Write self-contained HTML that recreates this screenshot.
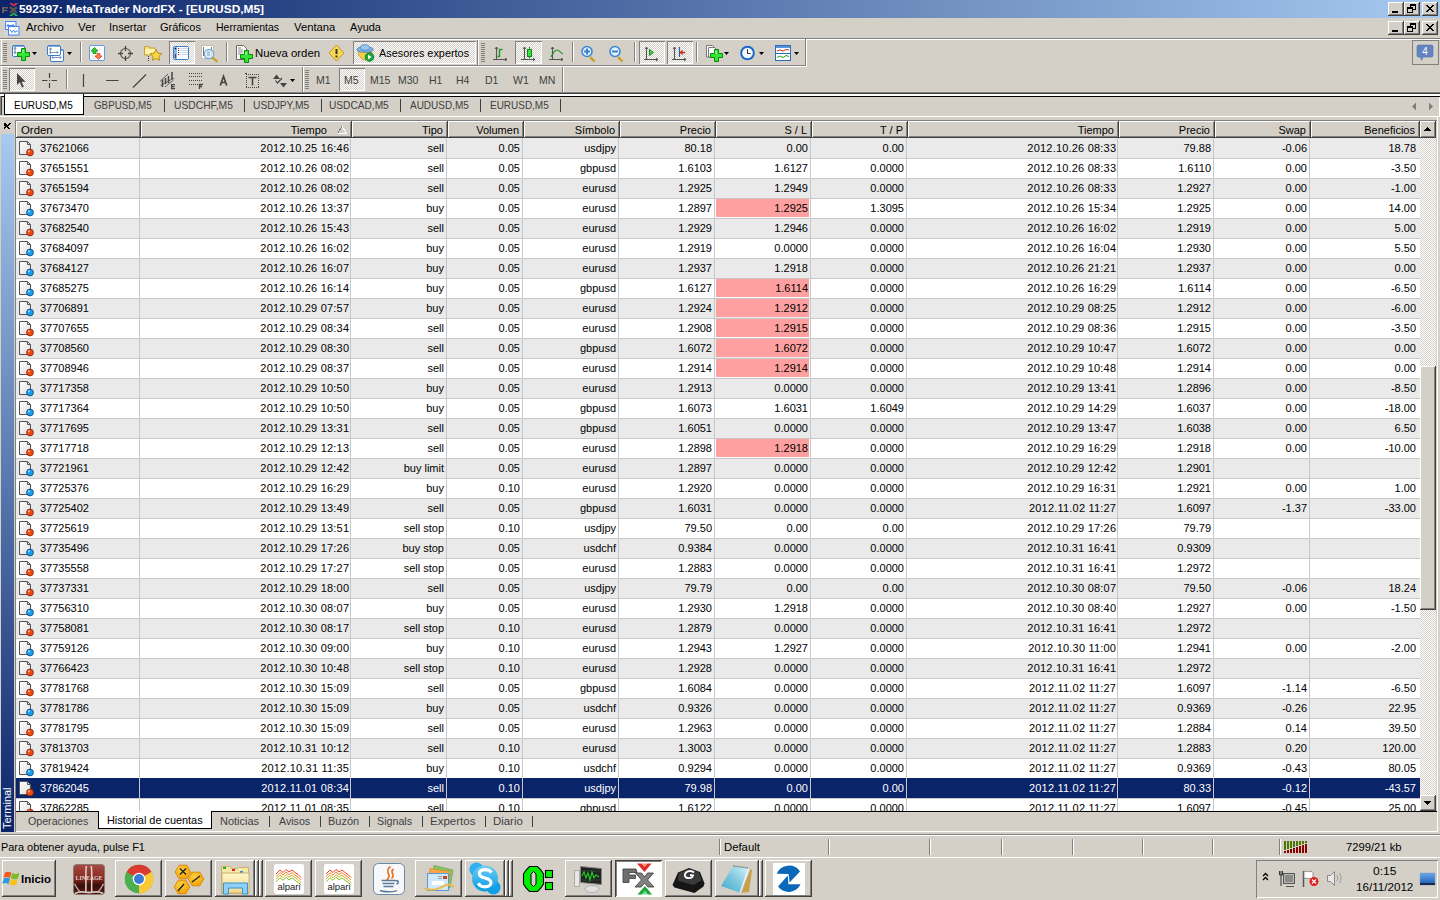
<!DOCTYPE html><html><head><meta charset="utf-8"><title>MetaTrader</title><style>
*{box-sizing:border-box}
html,body{margin:0;padding:0}
body{width:1440px;height:900px;position:relative;overflow:hidden;background:#D4D0C8;font-family:"Liberation Sans",sans-serif;font-size:11px;color:#000}
div,svg{position:absolute}
.t{white-space:nowrap;line-height:12px;height:12px}
.rb{background:#D4D0C8;box-shadow:inset -1px -1px #404040,inset 1px 1px #fff,inset -2px -2px #808080}
.pr{background-color:#fff;background-image:linear-gradient(45deg,#D4D0C8 25%,transparent 25%,transparent 75%,#D4D0C8 75%),linear-gradient(45deg,#D4D0C8 25%,transparent 25%,transparent 75%,#D4D0C8 75%);background-size:2px 2px;background-position:0 0,1px 1px;box-shadow:inset 1px 1px #808080,inset -1px -1px #fff}
.hd{background:#D4D0C8;box-shadow:inset -1px -1px #404040,inset 1px 1px #fff,inset -2px -2px #808080}
.grip{background:repeating-linear-gradient(to bottom,#808080 0 1px,transparent 1px 2px);width:4px}
.cell{position:absolute;text-align:right;white-space:nowrap;line-height:12px;height:12px}
</style></head><body>
<svg width="0" height="0" style="left:0;top:0"><defs><linearGradient id="dg" x1="0" y1="0" x2="1" y2="1"><stop offset="0" stop-color="#fff"/><stop offset="1" stop-color="#DDD"/></linearGradient></defs></svg>
<div style="left:0px;top:0px;width:1440px;height:18px;background:linear-gradient(to right,#0A246A 0%,#A6CAF0 100%)"></div>
<div class="t" style="left:18.98px;top:3px;transform-origin:0 0;transform:scaleX(1.0167);color:#fff;font-weight:bold;font-size:11.7px">592397: MetaTrader NordFX - [EURUSD,M5]</div>
<div class="rb" style="left:1388px;top:2px;width:16px;height:14px;"></div><div style="left:1392px;top:11px;width:6px;height:2px;background:#000"></div><div class="rb" style="left:1404px;top:2px;width:16px;height:14px;"></div><div style="left:1410px;top:4px;width:6px;height:6px;border:1px solid #000;border-top-width:2px"></div><div style="left:1407px;top:7px;width:6px;height:6px;border:1px solid #000;border-top-width:2px;background:#D4D0C8"></div><div class="rb" style="left:1422px;top:2px;width:16px;height:14px;"></div><svg style="left:1425px;top:4px;" width="10" height="9" viewBox="0 0 10 9" shape-rendering="crispEdges"><path d="M1 1L8 8M2 1L9 8M8 1L1 8M9 1L2 8" stroke="#000" stroke-width="1" shape-rendering="crispEdges"/></svg>
<div class="t" style="left:26.00px;top:21px;transform-origin:0 0;transform:scaleX(1.0278);">Archivo</div>
<div class="t" style="left:78.00px;top:21px;transform-origin:0 0;transform:scaleX(1.0625);">Ver</div>
<div class="t" style="left:109.00px;top:21px;transform-origin:0 0;transform:scaleX(1.0000);">Insertar</div>
<div class="t" style="left:160.00px;top:21px;transform-origin:0 0;transform:scaleX(1.0000);">Gráficos</div>
<div class="t" style="left:216.05px;top:21px;transform-origin:0 0;transform:scaleX(0.9538);">Herramientas</div>
<div class="t" style="left:294.00px;top:21px;transform-origin:0 0;transform:scaleX(1.0250);">Ventana</div>
<div class="t" style="left:350.00px;top:21px;transform-origin:0 0;transform:scaleX(1.0000);">Ayuda</div>
<div class="rb" style="left:1388px;top:21px;width:16px;height:14px;"></div><div style="left:1392px;top:30px;width:6px;height:2px;background:#000"></div><div class="rb" style="left:1404px;top:21px;width:16px;height:14px;"></div><div style="left:1410px;top:23px;width:6px;height:6px;border:1px solid #000;border-top-width:2px"></div><div style="left:1407px;top:26px;width:6px;height:6px;border:1px solid #000;border-top-width:2px;background:#D4D0C8"></div><div class="rb" style="left:1422px;top:21px;width:16px;height:14px;"></div><svg style="left:1425px;top:23px;" width="10" height="9" viewBox="0 0 10 9" shape-rendering="crispEdges"><path d="M1 1L8 8M2 1L9 8M8 1L1 8M9 1L2 8" stroke="#000" stroke-width="1" shape-rendering="crispEdges"/></svg>
<div style="left:0px;top:38px;width:1440px;height:1px;background:#808080"></div>
<div style="left:0px;top:39px;width:1440px;height:1px;background:#fff"></div>
<div style="left:0px;top:65px;width:806px;height:1px;background:#808080"></div>
<div style="left:0px;top:66px;width:807px;height:1px;background:#fff"></div>
<div style="left:1px;top:40px;width:1px;height:25px;background:#fff"></div>
<div style="left:477px;top:40px;width:1px;height:26px;background:#808080"></div>
<div style="left:478px;top:40px;width:1px;height:25px;background:#fff"></div>
<div style="left:805px;top:39px;width:1px;height:27px;background:#808080"></div>
<div style="left:806px;top:39px;width:1px;height:28px;background:#fff"></div>
<div class="grip" style="left:3px;top:43px;width:4px;height:19px;"></div>
<div class="grip" style="left:481px;top:43px;width:4px;height:19px;"></div>
<div style="left:80px;top:42px;width:1px;height:20px;background:#808080"></div><div style="left:81px;top:42px;width:1px;height:20px;background:#fff"></div>
<div style="left:226px;top:42px;width:1px;height:20px;background:#808080"></div><div style="left:227px;top:42px;width:1px;height:20px;background:#fff"></div>
<div style="left:572px;top:42px;width:1px;height:20px;background:#808080"></div><div style="left:573px;top:42px;width:1px;height:20px;background:#fff"></div>
<div style="left:634px;top:42px;width:1px;height:20px;background:#808080"></div><div style="left:635px;top:42px;width:1px;height:20px;background:#fff"></div>
<div style="left:696px;top:42px;width:1px;height:20px;background:#808080"></div><div style="left:697px;top:42px;width:1px;height:20px;background:#fff"></div>
<div class="pr" style="left:169px;top:41px;width:26px;height:23px;"></div>
<div class="pr" style="left:353px;top:41px;width:123px;height:23px;"></div>
<div class="pr" style="left:515px;top:41px;width:27px;height:23px;"></div>
<div class="pr" style="left:639px;top:41px;width:26px;height:23px;"></div>
<div class="pr" style="left:667px;top:41px;width:26px;height:23px;"></div>
<div class="t" style="left:254.97px;top:47px;transform-origin:0 0;transform:scaleX(1.0328);">Nueva orden</div>
<div class="t" style="left:379.00px;top:47px;transform-origin:0 0;transform:scaleX(0.9890);">Asesores expertos</div>
<div style="left:0px;top:92px;width:1440px;height:1px;background:#808080"></div>
<div style="left:0px;top:93px;width:1440px;height:1px;background:#404040"></div>
<div style="left:1px;top:67px;width:1px;height:25px;background:#fff"></div>
<div style="left:302px;top:67px;width:1px;height:25px;background:#808080"></div>
<div style="left:303px;top:67px;width:1px;height:25px;background:#fff"></div>
<div style="left:562px;top:67px;width:1px;height:25px;background:#808080"></div>
<div style="left:563px;top:67px;width:1px;height:25px;background:#fff"></div>
<div class="grip" style="left:3px;top:70px;width:4px;height:19px;"></div>
<div class="grip" style="left:305px;top:70px;width:4px;height:19px;"></div>
<div style="left:66px;top:69px;width:1px;height:20px;background:#808080"></div><div style="left:67px;top:69px;width:1px;height:20px;background:#fff"></div>
<div class="pr" style="left:9px;top:68px;width:26px;height:23px;"></div>
<div class="pr" style="left:339px;top:68px;width:26px;height:23px;"></div>
<div class="t" style="left:316px;top:74px;color:#404040;font-size:10.5px">M1</div>
<div class="t" style="left:344px;top:74px;color:#404040;font-size:10.5px">M5</div>
<div class="t" style="left:370px;top:74px;color:#404040;font-size:10.5px">M15</div>
<div class="t" style="left:398px;top:74px;color:#404040;font-size:10.5px">M30</div>
<div class="t" style="left:429px;top:74px;color:#404040;font-size:10.5px">H1</div>
<div class="t" style="left:456px;top:74px;color:#404040;font-size:10.5px">H4</div>
<div class="t" style="left:485px;top:74px;color:#404040;font-size:10.5px">D1</div>
<div class="t" style="left:513px;top:74px;color:#404040;font-size:10.5px">W1</div>
<div class="t" style="left:539px;top:74px;color:#404040;font-size:10.5px">MN</div>
<div style="left:0px;top:94px;width:1440px;height:2px;background:#fff"></div>
<div style="left:0px;top:96px;width:1440px;height:1px;background:#000"></div>
<div style="left:1439px;top:97px;width:1px;height:19px;background:#fff"></div>
<div style="left:0px;top:96px;width:1px;height:19px;background:#808080"></div>
<div style="left:1px;top:96px;width:1px;height:19px;background:#404040"></div>
<div style="left:4px;top:94px;width:80px;height:21px;background:#fff;border:1px solid #000;border-top:none"></div>
<div class="t" style="left:14.09px;top:99px;transform-origin:0 0;transform:scaleX(0.9062);">EURUSD,M5</div>
<div class="t" style="left:94.11px;top:99px;transform-origin:0 0;transform:scaleX(0.8906);color:#404040">GBPUSD,M5</div>
<div style="left:164px;top:99px;width:1px;height:13px;background:#404040"></div>
<div class="t" style="left:174.06px;top:99px;transform-origin:0 0;transform:scaleX(0.9355);color:#404040">USDCHF,M5</div>
<div style="left:244px;top:99px;width:1px;height:13px;background:#404040"></div>
<div class="t" style="left:253.07px;top:99px;transform-origin:0 0;transform:scaleX(0.9322);color:#404040">USDJPY,M5</div>
<div style="left:321px;top:99px;width:1px;height:13px;background:#404040"></div>
<div class="t" style="left:329.08px;top:99px;transform-origin:0 0;transform:scaleX(0.9219);color:#404040">USDCAD,M5</div>
<div style="left:400px;top:99px;width:1px;height:13px;background:#404040"></div>
<div class="t" style="left:410.00px;top:99px;transform-origin:0 0;transform:scaleX(0.9077);color:#404040">AUDUSD,M5</div>
<div style="left:480px;top:99px;width:1px;height:13px;background:#404040"></div>
<div class="t" style="left:490.09px;top:99px;transform-origin:0 0;transform:scaleX(0.9062);color:#404040">EURUSD,M5</div>
<div style="left:560px;top:99px;width:1px;height:13px;background:#404040"></div>
<svg style="left:1412px;top:103px;" width="4" height="7" viewBox="0 0 4 7" shape-rendering="crispEdges"><path d="M3 0h1v7h-1v-1h-1v-1h-1v-1h-1v-1h1v-1h1v-1h1z" fill="#808080"/></svg>
<svg style="left:1429px;top:103px;" width="4" height="7" viewBox="0 0 4 7" shape-rendering="crispEdges"><path d="M0 0h1v1h1v1h1v1h1v1h-1v1h-1v1h-1v1h-1z" fill="#808080"/></svg>
<div style="left:0px;top:116px;width:1440px;height:1px;background:#fff"></div>
<svg style="left:4px;top:123px;" width="7" height="6" viewBox="0 0 7 6" shape-rendering="crispEdges"><path d="M0 0h2v1h1v1h1v-1h1v-1h2v1h-1v1h-1v1h-1v1h1v1h1v1h-2v-1h-1v-1h-1v1h-1v1h-2v-1h1v-1h1v-1h-1v-1h-1z" fill="#000"/></svg>
<div style="left:1px;top:134px;width:13px;height:698px;background:linear-gradient(to bottom,#A6CAF0 0%,#0A246A 100%)"></div>
<div class="t" style="left:2px;top:829px;transform-origin:0 0;transform:rotate(-90deg);color:#fff;font-size:11px;line-height:11px;height:11px">Terminal</div>
<div style="left:15px;top:120px;width:1px;height:712px;background:#808080"></div>
<div style="left:15px;top:120px;width:1422px;height:1px;background:#808080"></div>
<div style="left:1437px;top:117px;width:1px;height:715px;background:#fff"></div>
<div style="left:15px;top:831px;width:1423px;height:1px;background:#fff"></div>
<div style="left:16px;top:138px;width:1404px;height:673px;background:#fff"></div>
<div style="left:16px;top:138px;width:1404px;height:21px;background:#EAEAEA"></div>
<div style="left:16px;top:158px;width:1404px;height:1px;background:#C8C8C8"></div>
<div style="left:16px;top:159px;width:1404px;height:20px;background:#fff"></div>
<div style="left:16px;top:178px;width:1404px;height:1px;background:#C8C8C8"></div>
<div style="left:16px;top:179px;width:1404px;height:20px;background:#EAEAEA"></div>
<div style="left:16px;top:198px;width:1404px;height:1px;background:#C8C8C8"></div>
<div style="left:16px;top:199px;width:1404px;height:20px;background:#fff"></div>
<div style="left:16px;top:218px;width:1404px;height:1px;background:#C8C8C8"></div>
<div style="left:16px;top:219px;width:1404px;height:20px;background:#EAEAEA"></div>
<div style="left:16px;top:238px;width:1404px;height:1px;background:#C8C8C8"></div>
<div style="left:16px;top:239px;width:1404px;height:20px;background:#fff"></div>
<div style="left:16px;top:258px;width:1404px;height:1px;background:#C8C8C8"></div>
<div style="left:16px;top:259px;width:1404px;height:20px;background:#EAEAEA"></div>
<div style="left:16px;top:278px;width:1404px;height:1px;background:#C8C8C8"></div>
<div style="left:16px;top:279px;width:1404px;height:20px;background:#fff"></div>
<div style="left:16px;top:298px;width:1404px;height:1px;background:#C8C8C8"></div>
<div style="left:16px;top:299px;width:1404px;height:20px;background:#EAEAEA"></div>
<div style="left:16px;top:318px;width:1404px;height:1px;background:#C8C8C8"></div>
<div style="left:16px;top:319px;width:1404px;height:20px;background:#fff"></div>
<div style="left:16px;top:338px;width:1404px;height:1px;background:#C8C8C8"></div>
<div style="left:16px;top:339px;width:1404px;height:20px;background:#EAEAEA"></div>
<div style="left:16px;top:358px;width:1404px;height:1px;background:#C8C8C8"></div>
<div style="left:16px;top:359px;width:1404px;height:20px;background:#fff"></div>
<div style="left:16px;top:378px;width:1404px;height:1px;background:#C8C8C8"></div>
<div style="left:16px;top:379px;width:1404px;height:20px;background:#EAEAEA"></div>
<div style="left:16px;top:398px;width:1404px;height:1px;background:#C8C8C8"></div>
<div style="left:16px;top:399px;width:1404px;height:20px;background:#fff"></div>
<div style="left:16px;top:418px;width:1404px;height:1px;background:#C8C8C8"></div>
<div style="left:16px;top:419px;width:1404px;height:20px;background:#EAEAEA"></div>
<div style="left:16px;top:438px;width:1404px;height:1px;background:#C8C8C8"></div>
<div style="left:16px;top:439px;width:1404px;height:20px;background:#fff"></div>
<div style="left:16px;top:458px;width:1404px;height:1px;background:#C8C8C8"></div>
<div style="left:16px;top:459px;width:1404px;height:20px;background:#EAEAEA"></div>
<div style="left:16px;top:478px;width:1404px;height:1px;background:#C8C8C8"></div>
<div style="left:16px;top:479px;width:1404px;height:20px;background:#fff"></div>
<div style="left:16px;top:498px;width:1404px;height:1px;background:#C8C8C8"></div>
<div style="left:16px;top:499px;width:1404px;height:20px;background:#EAEAEA"></div>
<div style="left:16px;top:518px;width:1404px;height:1px;background:#C8C8C8"></div>
<div style="left:16px;top:519px;width:1404px;height:20px;background:#fff"></div>
<div style="left:16px;top:538px;width:1404px;height:1px;background:#C8C8C8"></div>
<div style="left:16px;top:539px;width:1404px;height:20px;background:#EAEAEA"></div>
<div style="left:16px;top:558px;width:1404px;height:1px;background:#C8C8C8"></div>
<div style="left:16px;top:559px;width:1404px;height:20px;background:#fff"></div>
<div style="left:16px;top:578px;width:1404px;height:1px;background:#C8C8C8"></div>
<div style="left:16px;top:579px;width:1404px;height:20px;background:#EAEAEA"></div>
<div style="left:16px;top:598px;width:1404px;height:1px;background:#C8C8C8"></div>
<div style="left:16px;top:599px;width:1404px;height:20px;background:#fff"></div>
<div style="left:16px;top:618px;width:1404px;height:1px;background:#C8C8C8"></div>
<div style="left:16px;top:619px;width:1404px;height:20px;background:#EAEAEA"></div>
<div style="left:16px;top:638px;width:1404px;height:1px;background:#C8C8C8"></div>
<div style="left:16px;top:639px;width:1404px;height:20px;background:#fff"></div>
<div style="left:16px;top:658px;width:1404px;height:1px;background:#C8C8C8"></div>
<div style="left:16px;top:659px;width:1404px;height:20px;background:#EAEAEA"></div>
<div style="left:16px;top:678px;width:1404px;height:1px;background:#C8C8C8"></div>
<div style="left:16px;top:679px;width:1404px;height:20px;background:#fff"></div>
<div style="left:16px;top:698px;width:1404px;height:1px;background:#C8C8C8"></div>
<div style="left:16px;top:699px;width:1404px;height:20px;background:#EAEAEA"></div>
<div style="left:16px;top:718px;width:1404px;height:1px;background:#C8C8C8"></div>
<div style="left:16px;top:719px;width:1404px;height:20px;background:#fff"></div>
<div style="left:16px;top:738px;width:1404px;height:1px;background:#C8C8C8"></div>
<div style="left:16px;top:739px;width:1404px;height:20px;background:#EAEAEA"></div>
<div style="left:16px;top:758px;width:1404px;height:1px;background:#C8C8C8"></div>
<div style="left:16px;top:759px;width:1404px;height:20px;background:#fff"></div>
<div style="left:16px;top:778px;width:1404px;height:1px;background:#C8C8C8"></div>
<div style="left:16px;top:779px;width:1404px;height:20px;background:#0A246A"></div>
<div style="left:16px;top:798px;width:1404px;height:1px;background:#C8C8C8"></div>
<div style="left:16px;top:799px;width:1404px;height:20px;background:#fff"></div>
<div style="left:16px;top:818px;width:1404px;height:1px;background:#C8C8C8"></div>
<div style="left:139px;top:138px;width:1px;height:673px;background:#C8C8C8"></div>
<div style="left:350px;top:138px;width:1px;height:673px;background:#C8C8C8"></div>
<div style="left:446px;top:138px;width:1px;height:673px;background:#C8C8C8"></div>
<div style="left:522px;top:138px;width:1px;height:673px;background:#C8C8C8"></div>
<div style="left:618px;top:138px;width:1px;height:673px;background:#C8C8C8"></div>
<div style="left:714px;top:138px;width:1px;height:673px;background:#C8C8C8"></div>
<div style="left:810px;top:138px;width:1px;height:673px;background:#C8C8C8"></div>
<div style="left:906px;top:138px;width:1px;height:673px;background:#C8C8C8"></div>
<div style="left:1117px;top:138px;width:1px;height:673px;background:#C8C8C8"></div>
<div style="left:1213px;top:138px;width:1px;height:673px;background:#C8C8C8"></div>
<div style="left:1309px;top:138px;width:1px;height:673px;background:#C8C8C8"></div>
<div style="left:16px;top:778px;width:1404px;height:20px;background:#0A246A"></div>
<div style="left:139px;top:778px;width:1px;height:20px;background:#C8C8C8"></div>
<div style="left:350px;top:778px;width:1px;height:20px;background:#C8C8C8"></div>
<div style="left:446px;top:778px;width:1px;height:20px;background:#C8C8C8"></div>
<div style="left:522px;top:778px;width:1px;height:20px;background:#C8C8C8"></div>
<div style="left:618px;top:778px;width:1px;height:20px;background:#C8C8C8"></div>
<div style="left:714px;top:778px;width:1px;height:20px;background:#C8C8C8"></div>
<div style="left:810px;top:778px;width:1px;height:20px;background:#C8C8C8"></div>
<div style="left:906px;top:778px;width:1px;height:20px;background:#C8C8C8"></div>
<div style="left:1117px;top:778px;width:1px;height:20px;background:#C8C8C8"></div>
<div style="left:1213px;top:778px;width:1px;height:20px;background:#C8C8C8"></div>
<div style="left:1309px;top:778px;width:1px;height:20px;background:#C8C8C8"></div>
<svg style="left:16px;top:139px;" width="20" height="20" viewBox="0 0 20 20"><path d="M3.5 2.5H11.5L14.5 5.5V15.5H3.5Z" fill="url(#dg)" stroke="#555"/><path d="M11.5 2.5V5.5H14.5" fill="none" stroke="#555"/><circle cx="14" cy="13.5" r="3.4" fill="#F04A12" stroke="#8A2A08" stroke-width="0.9"/><circle cx="12.9" cy="12.3" r="1.1" fill="#fff" opacity=".55"/></svg>
<svg style="left:16px;top:159px;" width="20" height="20" viewBox="0 0 20 20"><path d="M3.5 2.5H11.5L14.5 5.5V15.5H3.5Z" fill="url(#dg)" stroke="#555"/><path d="M11.5 2.5V5.5H14.5" fill="none" stroke="#555"/><circle cx="14" cy="13.5" r="3.4" fill="#F04A12" stroke="#8A2A08" stroke-width="0.9"/><circle cx="12.9" cy="12.3" r="1.1" fill="#fff" opacity=".55"/></svg>
<svg style="left:16px;top:179px;" width="20" height="20" viewBox="0 0 20 20"><path d="M3.5 2.5H11.5L14.5 5.5V15.5H3.5Z" fill="url(#dg)" stroke="#555"/><path d="M11.5 2.5V5.5H14.5" fill="none" stroke="#555"/><circle cx="14" cy="13.5" r="3.4" fill="#F04A12" stroke="#8A2A08" stroke-width="0.9"/><circle cx="12.9" cy="12.3" r="1.1" fill="#fff" opacity=".55"/></svg>
<svg style="left:16px;top:199px;" width="20" height="20" viewBox="0 0 20 20"><path d="M3.5 2.5H11.5L14.5 5.5V15.5H3.5Z" fill="url(#dg)" stroke="#555"/><path d="M11.5 2.5V5.5H14.5" fill="none" stroke="#555"/><circle cx="14" cy="13.5" r="3.4" fill="#18A0F0" stroke="#0A4C80" stroke-width="0.9"/><circle cx="12.9" cy="12.3" r="1.1" fill="#fff" opacity=".55"/></svg>
<div style="left:716px;top:199px;width:93px;height:18px;background:#FFA0A0"></div>
<svg style="left:16px;top:219px;" width="20" height="20" viewBox="0 0 20 20"><path d="M3.5 2.5H11.5L14.5 5.5V15.5H3.5Z" fill="url(#dg)" stroke="#555"/><path d="M11.5 2.5V5.5H14.5" fill="none" stroke="#555"/><circle cx="14" cy="13.5" r="3.4" fill="#F04A12" stroke="#8A2A08" stroke-width="0.9"/><circle cx="12.9" cy="12.3" r="1.1" fill="#fff" opacity=".55"/></svg>
<svg style="left:16px;top:239px;" width="20" height="20" viewBox="0 0 20 20"><path d="M3.5 2.5H11.5L14.5 5.5V15.5H3.5Z" fill="url(#dg)" stroke="#555"/><path d="M11.5 2.5V5.5H14.5" fill="none" stroke="#555"/><circle cx="14" cy="13.5" r="3.4" fill="#18A0F0" stroke="#0A4C80" stroke-width="0.9"/><circle cx="12.9" cy="12.3" r="1.1" fill="#fff" opacity=".55"/></svg>
<svg style="left:16px;top:259px;" width="20" height="20" viewBox="0 0 20 20"><path d="M3.5 2.5H11.5L14.5 5.5V15.5H3.5Z" fill="url(#dg)" stroke="#555"/><path d="M11.5 2.5V5.5H14.5" fill="none" stroke="#555"/><circle cx="14" cy="13.5" r="3.4" fill="#18A0F0" stroke="#0A4C80" stroke-width="0.9"/><circle cx="12.9" cy="12.3" r="1.1" fill="#fff" opacity=".55"/></svg>
<svg style="left:16px;top:279px;" width="20" height="20" viewBox="0 0 20 20"><path d="M3.5 2.5H11.5L14.5 5.5V15.5H3.5Z" fill="url(#dg)" stroke="#555"/><path d="M11.5 2.5V5.5H14.5" fill="none" stroke="#555"/><circle cx="14" cy="13.5" r="3.4" fill="#18A0F0" stroke="#0A4C80" stroke-width="0.9"/><circle cx="12.9" cy="12.3" r="1.1" fill="#fff" opacity=".55"/></svg>
<div style="left:716px;top:279px;width:93px;height:18px;background:#FFA0A0"></div>
<svg style="left:16px;top:299px;" width="20" height="20" viewBox="0 0 20 20"><path d="M3.5 2.5H11.5L14.5 5.5V15.5H3.5Z" fill="url(#dg)" stroke="#555"/><path d="M11.5 2.5V5.5H14.5" fill="none" stroke="#555"/><circle cx="14" cy="13.5" r="3.4" fill="#18A0F0" stroke="#0A4C80" stroke-width="0.9"/><circle cx="12.9" cy="12.3" r="1.1" fill="#fff" opacity=".55"/></svg>
<div style="left:716px;top:299px;width:93px;height:18px;background:#FFA0A0"></div>
<svg style="left:16px;top:319px;" width="20" height="20" viewBox="0 0 20 20"><path d="M3.5 2.5H11.5L14.5 5.5V15.5H3.5Z" fill="url(#dg)" stroke="#555"/><path d="M11.5 2.5V5.5H14.5" fill="none" stroke="#555"/><circle cx="14" cy="13.5" r="3.4" fill="#F04A12" stroke="#8A2A08" stroke-width="0.9"/><circle cx="12.9" cy="12.3" r="1.1" fill="#fff" opacity=".55"/></svg>
<div style="left:716px;top:319px;width:93px;height:18px;background:#FFA0A0"></div>
<svg style="left:16px;top:339px;" width="20" height="20" viewBox="0 0 20 20"><path d="M3.5 2.5H11.5L14.5 5.5V15.5H3.5Z" fill="url(#dg)" stroke="#555"/><path d="M11.5 2.5V5.5H14.5" fill="none" stroke="#555"/><circle cx="14" cy="13.5" r="3.4" fill="#F04A12" stroke="#8A2A08" stroke-width="0.9"/><circle cx="12.9" cy="12.3" r="1.1" fill="#fff" opacity=".55"/></svg>
<div style="left:716px;top:339px;width:93px;height:18px;background:#FFA0A0"></div>
<svg style="left:16px;top:359px;" width="20" height="20" viewBox="0 0 20 20"><path d="M3.5 2.5H11.5L14.5 5.5V15.5H3.5Z" fill="url(#dg)" stroke="#555"/><path d="M11.5 2.5V5.5H14.5" fill="none" stroke="#555"/><circle cx="14" cy="13.5" r="3.4" fill="#F04A12" stroke="#8A2A08" stroke-width="0.9"/><circle cx="12.9" cy="12.3" r="1.1" fill="#fff" opacity=".55"/></svg>
<div style="left:716px;top:359px;width:93px;height:18px;background:#FFA0A0"></div>
<svg style="left:16px;top:379px;" width="20" height="20" viewBox="0 0 20 20"><path d="M3.5 2.5H11.5L14.5 5.5V15.5H3.5Z" fill="url(#dg)" stroke="#555"/><path d="M11.5 2.5V5.5H14.5" fill="none" stroke="#555"/><circle cx="14" cy="13.5" r="3.4" fill="#18A0F0" stroke="#0A4C80" stroke-width="0.9"/><circle cx="12.9" cy="12.3" r="1.1" fill="#fff" opacity=".55"/></svg>
<svg style="left:16px;top:399px;" width="20" height="20" viewBox="0 0 20 20"><path d="M3.5 2.5H11.5L14.5 5.5V15.5H3.5Z" fill="url(#dg)" stroke="#555"/><path d="M11.5 2.5V5.5H14.5" fill="none" stroke="#555"/><circle cx="14" cy="13.5" r="3.4" fill="#18A0F0" stroke="#0A4C80" stroke-width="0.9"/><circle cx="12.9" cy="12.3" r="1.1" fill="#fff" opacity=".55"/></svg>
<svg style="left:16px;top:419px;" width="20" height="20" viewBox="0 0 20 20"><path d="M3.5 2.5H11.5L14.5 5.5V15.5H3.5Z" fill="url(#dg)" stroke="#555"/><path d="M11.5 2.5V5.5H14.5" fill="none" stroke="#555"/><circle cx="14" cy="13.5" r="3.4" fill="#F04A12" stroke="#8A2A08" stroke-width="0.9"/><circle cx="12.9" cy="12.3" r="1.1" fill="#fff" opacity=".55"/></svg>
<svg style="left:16px;top:439px;" width="20" height="20" viewBox="0 0 20 20"><path d="M3.5 2.5H11.5L14.5 5.5V15.5H3.5Z" fill="url(#dg)" stroke="#555"/><path d="M11.5 2.5V5.5H14.5" fill="none" stroke="#555"/><circle cx="14" cy="13.5" r="3.4" fill="#F04A12" stroke="#8A2A08" stroke-width="0.9"/><circle cx="12.9" cy="12.3" r="1.1" fill="#fff" opacity=".55"/></svg>
<div style="left:716px;top:439px;width:93px;height:18px;background:#FFA0A0"></div>
<svg style="left:16px;top:459px;" width="20" height="20" viewBox="0 0 20 20"><path d="M3.5 2.5H11.5L14.5 5.5V15.5H3.5Z" fill="url(#dg)" stroke="#555"/><path d="M11.5 2.5V5.5H14.5" fill="none" stroke="#555"/><circle cx="14" cy="13.5" r="3.4" fill="#18A0F0" stroke="#0A4C80" stroke-width="0.9"/><circle cx="12.9" cy="12.3" r="1.1" fill="#fff" opacity=".55"/></svg>
<svg style="left:16px;top:479px;" width="20" height="20" viewBox="0 0 20 20"><path d="M3.5 2.5H11.5L14.5 5.5V15.5H3.5Z" fill="url(#dg)" stroke="#555"/><path d="M11.5 2.5V5.5H14.5" fill="none" stroke="#555"/><circle cx="14" cy="13.5" r="3.4" fill="#18A0F0" stroke="#0A4C80" stroke-width="0.9"/><circle cx="12.9" cy="12.3" r="1.1" fill="#fff" opacity=".55"/></svg>
<svg style="left:16px;top:499px;" width="20" height="20" viewBox="0 0 20 20"><path d="M3.5 2.5H11.5L14.5 5.5V15.5H3.5Z" fill="url(#dg)" stroke="#555"/><path d="M11.5 2.5V5.5H14.5" fill="none" stroke="#555"/><circle cx="14" cy="13.5" r="3.4" fill="#F04A12" stroke="#8A2A08" stroke-width="0.9"/><circle cx="12.9" cy="12.3" r="1.1" fill="#fff" opacity=".55"/></svg>
<svg style="left:16px;top:519px;" width="20" height="20" viewBox="0 0 20 20"><path d="M3.5 2.5H11.5L14.5 5.5V15.5H3.5Z" fill="url(#dg)" stroke="#555"/><path d="M11.5 2.5V5.5H14.5" fill="none" stroke="#555"/><circle cx="14" cy="13.5" r="3.4" fill="#F04A12" stroke="#8A2A08" stroke-width="0.9"/><circle cx="12.9" cy="12.3" r="1.1" fill="#fff" opacity=".55"/></svg>
<svg style="left:16px;top:539px;" width="20" height="20" viewBox="0 0 20 20"><path d="M3.5 2.5H11.5L14.5 5.5V15.5H3.5Z" fill="url(#dg)" stroke="#555"/><path d="M11.5 2.5V5.5H14.5" fill="none" stroke="#555"/><circle cx="14" cy="13.5" r="3.4" fill="#18A0F0" stroke="#0A4C80" stroke-width="0.9"/><circle cx="12.9" cy="12.3" r="1.1" fill="#fff" opacity=".55"/></svg>
<svg style="left:16px;top:559px;" width="20" height="20" viewBox="0 0 20 20"><path d="M3.5 2.5H11.5L14.5 5.5V15.5H3.5Z" fill="url(#dg)" stroke="#555"/><path d="M11.5 2.5V5.5H14.5" fill="none" stroke="#555"/><circle cx="14" cy="13.5" r="3.4" fill="#F04A12" stroke="#8A2A08" stroke-width="0.9"/><circle cx="12.9" cy="12.3" r="1.1" fill="#fff" opacity=".55"/></svg>
<svg style="left:16px;top:579px;" width="20" height="20" viewBox="0 0 20 20"><path d="M3.5 2.5H11.5L14.5 5.5V15.5H3.5Z" fill="url(#dg)" stroke="#555"/><path d="M11.5 2.5V5.5H14.5" fill="none" stroke="#555"/><circle cx="14" cy="13.5" r="3.4" fill="#F04A12" stroke="#8A2A08" stroke-width="0.9"/><circle cx="12.9" cy="12.3" r="1.1" fill="#fff" opacity=".55"/></svg>
<svg style="left:16px;top:599px;" width="20" height="20" viewBox="0 0 20 20"><path d="M3.5 2.5H11.5L14.5 5.5V15.5H3.5Z" fill="url(#dg)" stroke="#555"/><path d="M11.5 2.5V5.5H14.5" fill="none" stroke="#555"/><circle cx="14" cy="13.5" r="3.4" fill="#18A0F0" stroke="#0A4C80" stroke-width="0.9"/><circle cx="12.9" cy="12.3" r="1.1" fill="#fff" opacity=".55"/></svg>
<svg style="left:16px;top:619px;" width="20" height="20" viewBox="0 0 20 20"><path d="M3.5 2.5H11.5L14.5 5.5V15.5H3.5Z" fill="url(#dg)" stroke="#555"/><path d="M11.5 2.5V5.5H14.5" fill="none" stroke="#555"/><circle cx="14" cy="13.5" r="3.4" fill="#F04A12" stroke="#8A2A08" stroke-width="0.9"/><circle cx="12.9" cy="12.3" r="1.1" fill="#fff" opacity=".55"/></svg>
<svg style="left:16px;top:639px;" width="20" height="20" viewBox="0 0 20 20"><path d="M3.5 2.5H11.5L14.5 5.5V15.5H3.5Z" fill="url(#dg)" stroke="#555"/><path d="M11.5 2.5V5.5H14.5" fill="none" stroke="#555"/><circle cx="14" cy="13.5" r="3.4" fill="#18A0F0" stroke="#0A4C80" stroke-width="0.9"/><circle cx="12.9" cy="12.3" r="1.1" fill="#fff" opacity=".55"/></svg>
<svg style="left:16px;top:659px;" width="20" height="20" viewBox="0 0 20 20"><path d="M3.5 2.5H11.5L14.5 5.5V15.5H3.5Z" fill="url(#dg)" stroke="#555"/><path d="M11.5 2.5V5.5H14.5" fill="none" stroke="#555"/><circle cx="14" cy="13.5" r="3.4" fill="#F04A12" stroke="#8A2A08" stroke-width="0.9"/><circle cx="12.9" cy="12.3" r="1.1" fill="#fff" opacity=".55"/></svg>
<svg style="left:16px;top:679px;" width="20" height="20" viewBox="0 0 20 20"><path d="M3.5 2.5H11.5L14.5 5.5V15.5H3.5Z" fill="url(#dg)" stroke="#555"/><path d="M11.5 2.5V5.5H14.5" fill="none" stroke="#555"/><circle cx="14" cy="13.5" r="3.4" fill="#F04A12" stroke="#8A2A08" stroke-width="0.9"/><circle cx="12.9" cy="12.3" r="1.1" fill="#fff" opacity=".55"/></svg>
<svg style="left:16px;top:699px;" width="20" height="20" viewBox="0 0 20 20"><path d="M3.5 2.5H11.5L14.5 5.5V15.5H3.5Z" fill="url(#dg)" stroke="#555"/><path d="M11.5 2.5V5.5H14.5" fill="none" stroke="#555"/><circle cx="14" cy="13.5" r="3.4" fill="#18A0F0" stroke="#0A4C80" stroke-width="0.9"/><circle cx="12.9" cy="12.3" r="1.1" fill="#fff" opacity=".55"/></svg>
<svg style="left:16px;top:719px;" width="20" height="20" viewBox="0 0 20 20"><path d="M3.5 2.5H11.5L14.5 5.5V15.5H3.5Z" fill="url(#dg)" stroke="#555"/><path d="M11.5 2.5V5.5H14.5" fill="none" stroke="#555"/><circle cx="14" cy="13.5" r="3.4" fill="#F04A12" stroke="#8A2A08" stroke-width="0.9"/><circle cx="12.9" cy="12.3" r="1.1" fill="#fff" opacity=".55"/></svg>
<svg style="left:16px;top:739px;" width="20" height="20" viewBox="0 0 20 20"><path d="M3.5 2.5H11.5L14.5 5.5V15.5H3.5Z" fill="url(#dg)" stroke="#555"/><path d="M11.5 2.5V5.5H14.5" fill="none" stroke="#555"/><circle cx="14" cy="13.5" r="3.4" fill="#F04A12" stroke="#8A2A08" stroke-width="0.9"/><circle cx="12.9" cy="12.3" r="1.1" fill="#fff" opacity=".55"/></svg>
<svg style="left:16px;top:759px;" width="20" height="20" viewBox="0 0 20 20"><path d="M3.5 2.5H11.5L14.5 5.5V15.5H3.5Z" fill="url(#dg)" stroke="#555"/><path d="M11.5 2.5V5.5H14.5" fill="none" stroke="#555"/><circle cx="14" cy="13.5" r="3.4" fill="#18A0F0" stroke="#0A4C80" stroke-width="0.9"/><circle cx="12.9" cy="12.3" r="1.1" fill="#fff" opacity=".55"/></svg>
<svg style="left:16px;top:779px;" width="20" height="20" viewBox="0 0 20 20"><path d="M3.5 2.5H11.5L14.5 5.5V15.5H3.5Z" fill="url(#dg)" stroke="#555"/><path d="M11.5 2.5V5.5H14.5" fill="none" stroke="#555"/><circle cx="14" cy="13.5" r="3.4" fill="#F04A12" stroke="#8A2A08" stroke-width="0.9"/><circle cx="12.9" cy="12.3" r="1.1" fill="#fff" opacity=".55"/></svg>
<svg style="left:16px;top:799px;" width="20" height="20" viewBox="0 0 20 20"><path d="M3.5 2.5H11.5L14.5 5.5V15.5H3.5Z" fill="url(#dg)" stroke="#555"/><path d="M11.5 2.5V5.5H14.5" fill="none" stroke="#555"/><circle cx="14" cy="13.5" r="3.4" fill="#F04A12" stroke="#8A2A08" stroke-width="0.9"/><circle cx="12.9" cy="12.3" r="1.1" fill="#fff" opacity=".55"/></svg>
<div class="cell" style="left:40px;top:142px;text-align:left">37621066</div><div class="cell" style="right:1090.8px;top:142px;letter-spacing:0.2px;">2012.10.25 16:46</div><div class="cell" style="right:996px;top:142px;">sell</div><div class="cell" style="right:920px;top:142px;">0.05</div><div class="cell" style="right:824px;top:142px;">usdjpy</div><div class="cell" style="right:728px;top:142px;">80.18</div><div class="cell" style="right:632px;top:142px;">0.00</div><div class="cell" style="right:536px;top:142px;">0.00</div><div class="cell" style="right:323.8px;top:142px;letter-spacing:0.2px;">2012.10.26 08:33</div><div class="cell" style="right:229px;top:142px;">79.88</div><div class="cell" style="right:133px;top:142px;">-0.06</div><div class="cell" style="right:24px;top:142px;">18.78</div><div class="cell" style="left:40px;top:162px;text-align:left">37651551</div><div class="cell" style="right:1090.8px;top:162px;letter-spacing:0.2px;">2012.10.26 08:02</div><div class="cell" style="right:996px;top:162px;">sell</div><div class="cell" style="right:920px;top:162px;">0.05</div><div class="cell" style="right:824px;top:162px;">gbpusd</div><div class="cell" style="right:728px;top:162px;">1.6103</div><div class="cell" style="right:632px;top:162px;">1.6127</div><div class="cell" style="right:536px;top:162px;">0.0000</div><div class="cell" style="right:323.8px;top:162px;letter-spacing:0.2px;">2012.10.26 08:33</div><div class="cell" style="right:229px;top:162px;">1.6110</div><div class="cell" style="right:133px;top:162px;">0.00</div><div class="cell" style="right:24px;top:162px;">-3.50</div><div class="cell" style="left:40px;top:182px;text-align:left">37651594</div><div class="cell" style="right:1090.8px;top:182px;letter-spacing:0.2px;">2012.10.26 08:02</div><div class="cell" style="right:996px;top:182px;">sell</div><div class="cell" style="right:920px;top:182px;">0.05</div><div class="cell" style="right:824px;top:182px;">eurusd</div><div class="cell" style="right:728px;top:182px;">1.2925</div><div class="cell" style="right:632px;top:182px;">1.2949</div><div class="cell" style="right:536px;top:182px;">0.0000</div><div class="cell" style="right:323.8px;top:182px;letter-spacing:0.2px;">2012.10.26 08:33</div><div class="cell" style="right:229px;top:182px;">1.2927</div><div class="cell" style="right:133px;top:182px;">0.00</div><div class="cell" style="right:24px;top:182px;">-1.00</div><div class="cell" style="left:40px;top:202px;text-align:left">37673470</div><div class="cell" style="right:1090.8px;top:202px;letter-spacing:0.2px;">2012.10.26 13:37</div><div class="cell" style="right:996px;top:202px;">buy</div><div class="cell" style="right:920px;top:202px;">0.05</div><div class="cell" style="right:824px;top:202px;">eurusd</div><div class="cell" style="right:728px;top:202px;">1.2897</div><div class="cell" style="right:632px;top:202px;">1.2925</div><div class="cell" style="right:536px;top:202px;">1.3095</div><div class="cell" style="right:323.8px;top:202px;letter-spacing:0.2px;">2012.10.26 15:34</div><div class="cell" style="right:229px;top:202px;">1.2925</div><div class="cell" style="right:133px;top:202px;">0.00</div><div class="cell" style="right:24px;top:202px;">14.00</div><div class="cell" style="left:40px;top:222px;text-align:left">37682540</div><div class="cell" style="right:1090.8px;top:222px;letter-spacing:0.2px;">2012.10.26 15:43</div><div class="cell" style="right:996px;top:222px;">sell</div><div class="cell" style="right:920px;top:222px;">0.05</div><div class="cell" style="right:824px;top:222px;">eurusd</div><div class="cell" style="right:728px;top:222px;">1.2929</div><div class="cell" style="right:632px;top:222px;">1.2946</div><div class="cell" style="right:536px;top:222px;">0.0000</div><div class="cell" style="right:323.8px;top:222px;letter-spacing:0.2px;">2012.10.26 16:02</div><div class="cell" style="right:229px;top:222px;">1.2919</div><div class="cell" style="right:133px;top:222px;">0.00</div><div class="cell" style="right:24px;top:222px;">5.00</div><div class="cell" style="left:40px;top:242px;text-align:left">37684097</div><div class="cell" style="right:1090.8px;top:242px;letter-spacing:0.2px;">2012.10.26 16:02</div><div class="cell" style="right:996px;top:242px;">buy</div><div class="cell" style="right:920px;top:242px;">0.05</div><div class="cell" style="right:824px;top:242px;">eurusd</div><div class="cell" style="right:728px;top:242px;">1.2919</div><div class="cell" style="right:632px;top:242px;">0.0000</div><div class="cell" style="right:536px;top:242px;">0.0000</div><div class="cell" style="right:323.8px;top:242px;letter-spacing:0.2px;">2012.10.26 16:04</div><div class="cell" style="right:229px;top:242px;">1.2930</div><div class="cell" style="right:133px;top:242px;">0.00</div><div class="cell" style="right:24px;top:242px;">5.50</div><div class="cell" style="left:40px;top:262px;text-align:left">37684127</div><div class="cell" style="right:1090.8px;top:262px;letter-spacing:0.2px;">2012.10.26 16:07</div><div class="cell" style="right:996px;top:262px;">buy</div><div class="cell" style="right:920px;top:262px;">0.05</div><div class="cell" style="right:824px;top:262px;">eurusd</div><div class="cell" style="right:728px;top:262px;">1.2937</div><div class="cell" style="right:632px;top:262px;">1.2918</div><div class="cell" style="right:536px;top:262px;">0.0000</div><div class="cell" style="right:323.8px;top:262px;letter-spacing:0.2px;">2012.10.26 21:21</div><div class="cell" style="right:229px;top:262px;">1.2937</div><div class="cell" style="right:133px;top:262px;">0.00</div><div class="cell" style="right:24px;top:262px;">0.00</div><div class="cell" style="left:40px;top:282px;text-align:left">37685275</div><div class="cell" style="right:1090.8px;top:282px;letter-spacing:0.2px;">2012.10.26 16:14</div><div class="cell" style="right:996px;top:282px;">buy</div><div class="cell" style="right:920px;top:282px;">0.05</div><div class="cell" style="right:824px;top:282px;">gbpusd</div><div class="cell" style="right:728px;top:282px;">1.6127</div><div class="cell" style="right:632px;top:282px;">1.6114</div><div class="cell" style="right:536px;top:282px;">0.0000</div><div class="cell" style="right:323.8px;top:282px;letter-spacing:0.2px;">2012.10.26 16:29</div><div class="cell" style="right:229px;top:282px;">1.6114</div><div class="cell" style="right:133px;top:282px;">0.00</div><div class="cell" style="right:24px;top:282px;">-6.50</div><div class="cell" style="left:40px;top:302px;text-align:left">37706891</div><div class="cell" style="right:1090.8px;top:302px;letter-spacing:0.2px;">2012.10.29 07:57</div><div class="cell" style="right:996px;top:302px;">buy</div><div class="cell" style="right:920px;top:302px;">0.05</div><div class="cell" style="right:824px;top:302px;">eurusd</div><div class="cell" style="right:728px;top:302px;">1.2924</div><div class="cell" style="right:632px;top:302px;">1.2912</div><div class="cell" style="right:536px;top:302px;">0.0000</div><div class="cell" style="right:323.8px;top:302px;letter-spacing:0.2px;">2012.10.29 08:25</div><div class="cell" style="right:229px;top:302px;">1.2912</div><div class="cell" style="right:133px;top:302px;">0.00</div><div class="cell" style="right:24px;top:302px;">-6.00</div><div class="cell" style="left:40px;top:322px;text-align:left">37707655</div><div class="cell" style="right:1090.8px;top:322px;letter-spacing:0.2px;">2012.10.29 08:34</div><div class="cell" style="right:996px;top:322px;">sell</div><div class="cell" style="right:920px;top:322px;">0.05</div><div class="cell" style="right:824px;top:322px;">eurusd</div><div class="cell" style="right:728px;top:322px;">1.2908</div><div class="cell" style="right:632px;top:322px;">1.2915</div><div class="cell" style="right:536px;top:322px;">0.0000</div><div class="cell" style="right:323.8px;top:322px;letter-spacing:0.2px;">2012.10.29 08:36</div><div class="cell" style="right:229px;top:322px;">1.2915</div><div class="cell" style="right:133px;top:322px;">0.00</div><div class="cell" style="right:24px;top:322px;">-3.50</div><div class="cell" style="left:40px;top:342px;text-align:left">37708560</div><div class="cell" style="right:1090.8px;top:342px;letter-spacing:0.2px;">2012.10.29 08:30</div><div class="cell" style="right:996px;top:342px;">sell</div><div class="cell" style="right:920px;top:342px;">0.05</div><div class="cell" style="right:824px;top:342px;">gbpusd</div><div class="cell" style="right:728px;top:342px;">1.6072</div><div class="cell" style="right:632px;top:342px;">1.6072</div><div class="cell" style="right:536px;top:342px;">0.0000</div><div class="cell" style="right:323.8px;top:342px;letter-spacing:0.2px;">2012.10.29 10:47</div><div class="cell" style="right:229px;top:342px;">1.6072</div><div class="cell" style="right:133px;top:342px;">0.00</div><div class="cell" style="right:24px;top:342px;">0.00</div><div class="cell" style="left:40px;top:362px;text-align:left">37708946</div><div class="cell" style="right:1090.8px;top:362px;letter-spacing:0.2px;">2012.10.29 08:37</div><div class="cell" style="right:996px;top:362px;">sell</div><div class="cell" style="right:920px;top:362px;">0.05</div><div class="cell" style="right:824px;top:362px;">eurusd</div><div class="cell" style="right:728px;top:362px;">1.2914</div><div class="cell" style="right:632px;top:362px;">1.2914</div><div class="cell" style="right:536px;top:362px;">0.0000</div><div class="cell" style="right:323.8px;top:362px;letter-spacing:0.2px;">2012.10.29 10:48</div><div class="cell" style="right:229px;top:362px;">1.2914</div><div class="cell" style="right:133px;top:362px;">0.00</div><div class="cell" style="right:24px;top:362px;">0.00</div><div class="cell" style="left:40px;top:382px;text-align:left">37717358</div><div class="cell" style="right:1090.8px;top:382px;letter-spacing:0.2px;">2012.10.29 10:50</div><div class="cell" style="right:996px;top:382px;">buy</div><div class="cell" style="right:920px;top:382px;">0.05</div><div class="cell" style="right:824px;top:382px;">eurusd</div><div class="cell" style="right:728px;top:382px;">1.2913</div><div class="cell" style="right:632px;top:382px;">0.0000</div><div class="cell" style="right:536px;top:382px;">0.0000</div><div class="cell" style="right:323.8px;top:382px;letter-spacing:0.2px;">2012.10.29 13:41</div><div class="cell" style="right:229px;top:382px;">1.2896</div><div class="cell" style="right:133px;top:382px;">0.00</div><div class="cell" style="right:24px;top:382px;">-8.50</div><div class="cell" style="left:40px;top:402px;text-align:left">37717364</div><div class="cell" style="right:1090.8px;top:402px;letter-spacing:0.2px;">2012.10.29 10:50</div><div class="cell" style="right:996px;top:402px;">buy</div><div class="cell" style="right:920px;top:402px;">0.05</div><div class="cell" style="right:824px;top:402px;">gbpusd</div><div class="cell" style="right:728px;top:402px;">1.6073</div><div class="cell" style="right:632px;top:402px;">1.6031</div><div class="cell" style="right:536px;top:402px;">1.6049</div><div class="cell" style="right:323.8px;top:402px;letter-spacing:0.2px;">2012.10.29 14:29</div><div class="cell" style="right:229px;top:402px;">1.6037</div><div class="cell" style="right:133px;top:402px;">0.00</div><div class="cell" style="right:24px;top:402px;">-18.00</div><div class="cell" style="left:40px;top:422px;text-align:left">37717695</div><div class="cell" style="right:1090.8px;top:422px;letter-spacing:0.2px;">2012.10.29 13:31</div><div class="cell" style="right:996px;top:422px;">sell</div><div class="cell" style="right:920px;top:422px;">0.05</div><div class="cell" style="right:824px;top:422px;">gbpusd</div><div class="cell" style="right:728px;top:422px;">1.6051</div><div class="cell" style="right:632px;top:422px;">0.0000</div><div class="cell" style="right:536px;top:422px;">0.0000</div><div class="cell" style="right:323.8px;top:422px;letter-spacing:0.2px;">2012.10.29 13:47</div><div class="cell" style="right:229px;top:422px;">1.6038</div><div class="cell" style="right:133px;top:422px;">0.00</div><div class="cell" style="right:24px;top:422px;">6.50</div><div class="cell" style="left:40px;top:442px;text-align:left">37717718</div><div class="cell" style="right:1090.8px;top:442px;letter-spacing:0.2px;">2012.10.29 12:13</div><div class="cell" style="right:996px;top:442px;">sell</div><div class="cell" style="right:920px;top:442px;">0.05</div><div class="cell" style="right:824px;top:442px;">eurusd</div><div class="cell" style="right:728px;top:442px;">1.2898</div><div class="cell" style="right:632px;top:442px;">1.2918</div><div class="cell" style="right:536px;top:442px;">0.0000</div><div class="cell" style="right:323.8px;top:442px;letter-spacing:0.2px;">2012.10.29 16:29</div><div class="cell" style="right:229px;top:442px;">1.2918</div><div class="cell" style="right:133px;top:442px;">0.00</div><div class="cell" style="right:24px;top:442px;">-10.00</div><div class="cell" style="left:40px;top:462px;text-align:left">37721961</div><div class="cell" style="right:1090.8px;top:462px;letter-spacing:0.2px;">2012.10.29 12:42</div><div class="cell" style="right:996px;top:462px;">buy limit</div><div class="cell" style="right:920px;top:462px;">0.05</div><div class="cell" style="right:824px;top:462px;">eurusd</div><div class="cell" style="right:728px;top:462px;">1.2897</div><div class="cell" style="right:632px;top:462px;">0.0000</div><div class="cell" style="right:536px;top:462px;">0.0000</div><div class="cell" style="right:323.8px;top:462px;letter-spacing:0.2px;">2012.10.29 12:42</div><div class="cell" style="right:229px;top:462px;">1.2901</div><div class="cell" style="left:40px;top:482px;text-align:left">37725376</div><div class="cell" style="right:1090.8px;top:482px;letter-spacing:0.2px;">2012.10.29 16:29</div><div class="cell" style="right:996px;top:482px;">buy</div><div class="cell" style="right:920px;top:482px;">0.10</div><div class="cell" style="right:824px;top:482px;">eurusd</div><div class="cell" style="right:728px;top:482px;">1.2920</div><div class="cell" style="right:632px;top:482px;">0.0000</div><div class="cell" style="right:536px;top:482px;">0.0000</div><div class="cell" style="right:323.8px;top:482px;letter-spacing:0.2px;">2012.10.29 16:31</div><div class="cell" style="right:229px;top:482px;">1.2921</div><div class="cell" style="right:133px;top:482px;">0.00</div><div class="cell" style="right:24px;top:482px;">1.00</div><div class="cell" style="left:40px;top:502px;text-align:left">37725402</div><div class="cell" style="right:1090.8px;top:502px;letter-spacing:0.2px;">2012.10.29 13:49</div><div class="cell" style="right:996px;top:502px;">sell</div><div class="cell" style="right:920px;top:502px;">0.05</div><div class="cell" style="right:824px;top:502px;">gbpusd</div><div class="cell" style="right:728px;top:502px;">1.6031</div><div class="cell" style="right:632px;top:502px;">0.0000</div><div class="cell" style="right:536px;top:502px;">0.0000</div><div class="cell" style="right:323.8px;top:502px;letter-spacing:0.2px;">2012.11.02 11:27</div><div class="cell" style="right:229px;top:502px;">1.6097</div><div class="cell" style="right:133px;top:502px;">-1.37</div><div class="cell" style="right:24px;top:502px;">-33.00</div><div class="cell" style="left:40px;top:522px;text-align:left">37725619</div><div class="cell" style="right:1090.8px;top:522px;letter-spacing:0.2px;">2012.10.29 13:51</div><div class="cell" style="right:996px;top:522px;">sell stop</div><div class="cell" style="right:920px;top:522px;">0.10</div><div class="cell" style="right:824px;top:522px;">usdjpy</div><div class="cell" style="right:728px;top:522px;">79.50</div><div class="cell" style="right:632px;top:522px;">0.00</div><div class="cell" style="right:536px;top:522px;">0.00</div><div class="cell" style="right:323.8px;top:522px;letter-spacing:0.2px;">2012.10.29 17:26</div><div class="cell" style="right:229px;top:522px;">79.79</div><div class="cell" style="left:40px;top:542px;text-align:left">37735496</div><div class="cell" style="right:1090.8px;top:542px;letter-spacing:0.2px;">2012.10.29 17:26</div><div class="cell" style="right:996px;top:542px;">buy stop</div><div class="cell" style="right:920px;top:542px;">0.05</div><div class="cell" style="right:824px;top:542px;">usdchf</div><div class="cell" style="right:728px;top:542px;">0.9384</div><div class="cell" style="right:632px;top:542px;">0.0000</div><div class="cell" style="right:536px;top:542px;">0.0000</div><div class="cell" style="right:323.8px;top:542px;letter-spacing:0.2px;">2012.10.31 16:41</div><div class="cell" style="right:229px;top:542px;">0.9309</div><div class="cell" style="left:40px;top:562px;text-align:left">37735558</div><div class="cell" style="right:1090.8px;top:562px;letter-spacing:0.2px;">2012.10.29 17:27</div><div class="cell" style="right:996px;top:562px;">sell stop</div><div class="cell" style="right:920px;top:562px;">0.05</div><div class="cell" style="right:824px;top:562px;">eurusd</div><div class="cell" style="right:728px;top:562px;">1.2883</div><div class="cell" style="right:632px;top:562px;">0.0000</div><div class="cell" style="right:536px;top:562px;">0.0000</div><div class="cell" style="right:323.8px;top:562px;letter-spacing:0.2px;">2012.10.31 16:41</div><div class="cell" style="right:229px;top:562px;">1.2972</div><div class="cell" style="left:40px;top:582px;text-align:left">37737331</div><div class="cell" style="right:1090.8px;top:582px;letter-spacing:0.2px;">2012.10.29 18:00</div><div class="cell" style="right:996px;top:582px;">sell</div><div class="cell" style="right:920px;top:582px;">0.05</div><div class="cell" style="right:824px;top:582px;">usdjpy</div><div class="cell" style="right:728px;top:582px;">79.79</div><div class="cell" style="right:632px;top:582px;">0.00</div><div class="cell" style="right:536px;top:582px;">0.00</div><div class="cell" style="right:323.8px;top:582px;letter-spacing:0.2px;">2012.10.30 08:07</div><div class="cell" style="right:229px;top:582px;">79.50</div><div class="cell" style="right:133px;top:582px;">-0.06</div><div class="cell" style="right:24px;top:582px;">18.24</div><div class="cell" style="left:40px;top:602px;text-align:left">37756310</div><div class="cell" style="right:1090.8px;top:602px;letter-spacing:0.2px;">2012.10.30 08:07</div><div class="cell" style="right:996px;top:602px;">buy</div><div class="cell" style="right:920px;top:602px;">0.05</div><div class="cell" style="right:824px;top:602px;">eurusd</div><div class="cell" style="right:728px;top:602px;">1.2930</div><div class="cell" style="right:632px;top:602px;">1.2918</div><div class="cell" style="right:536px;top:602px;">0.0000</div><div class="cell" style="right:323.8px;top:602px;letter-spacing:0.2px;">2012.10.30 08:40</div><div class="cell" style="right:229px;top:602px;">1.2927</div><div class="cell" style="right:133px;top:602px;">0.00</div><div class="cell" style="right:24px;top:602px;">-1.50</div><div class="cell" style="left:40px;top:622px;text-align:left">37758081</div><div class="cell" style="right:1090.8px;top:622px;letter-spacing:0.2px;">2012.10.30 08:17</div><div class="cell" style="right:996px;top:622px;">sell stop</div><div class="cell" style="right:920px;top:622px;">0.10</div><div class="cell" style="right:824px;top:622px;">eurusd</div><div class="cell" style="right:728px;top:622px;">1.2879</div><div class="cell" style="right:632px;top:622px;">0.0000</div><div class="cell" style="right:536px;top:622px;">0.0000</div><div class="cell" style="right:323.8px;top:622px;letter-spacing:0.2px;">2012.10.31 16:41</div><div class="cell" style="right:229px;top:622px;">1.2972</div><div class="cell" style="left:40px;top:642px;text-align:left">37759126</div><div class="cell" style="right:1090.8px;top:642px;letter-spacing:0.2px;">2012.10.30 09:00</div><div class="cell" style="right:996px;top:642px;">buy</div><div class="cell" style="right:920px;top:642px;">0.10</div><div class="cell" style="right:824px;top:642px;">eurusd</div><div class="cell" style="right:728px;top:642px;">1.2943</div><div class="cell" style="right:632px;top:642px;">1.2927</div><div class="cell" style="right:536px;top:642px;">0.0000</div><div class="cell" style="right:323.8px;top:642px;letter-spacing:0.2px;">2012.10.30 11:00</div><div class="cell" style="right:229px;top:642px;">1.2941</div><div class="cell" style="right:133px;top:642px;">0.00</div><div class="cell" style="right:24px;top:642px;">-2.00</div><div class="cell" style="left:40px;top:662px;text-align:left">37766423</div><div class="cell" style="right:1090.8px;top:662px;letter-spacing:0.2px;">2012.10.30 10:48</div><div class="cell" style="right:996px;top:662px;">sell stop</div><div class="cell" style="right:920px;top:662px;">0.10</div><div class="cell" style="right:824px;top:662px;">eurusd</div><div class="cell" style="right:728px;top:662px;">1.2928</div><div class="cell" style="right:632px;top:662px;">0.0000</div><div class="cell" style="right:536px;top:662px;">0.0000</div><div class="cell" style="right:323.8px;top:662px;letter-spacing:0.2px;">2012.10.31 16:41</div><div class="cell" style="right:229px;top:662px;">1.2972</div><div class="cell" style="left:40px;top:682px;text-align:left">37781768</div><div class="cell" style="right:1090.8px;top:682px;letter-spacing:0.2px;">2012.10.30 15:09</div><div class="cell" style="right:996px;top:682px;">sell</div><div class="cell" style="right:920px;top:682px;">0.05</div><div class="cell" style="right:824px;top:682px;">gbpusd</div><div class="cell" style="right:728px;top:682px;">1.6084</div><div class="cell" style="right:632px;top:682px;">0.0000</div><div class="cell" style="right:536px;top:682px;">0.0000</div><div class="cell" style="right:323.8px;top:682px;letter-spacing:0.2px;">2012.11.02 11:27</div><div class="cell" style="right:229px;top:682px;">1.6097</div><div class="cell" style="right:133px;top:682px;">-1.14</div><div class="cell" style="right:24px;top:682px;">-6.50</div><div class="cell" style="left:40px;top:702px;text-align:left">37781786</div><div class="cell" style="right:1090.8px;top:702px;letter-spacing:0.2px;">2012.10.30 15:09</div><div class="cell" style="right:996px;top:702px;">buy</div><div class="cell" style="right:920px;top:702px;">0.05</div><div class="cell" style="right:824px;top:702px;">usdchf</div><div class="cell" style="right:728px;top:702px;">0.9326</div><div class="cell" style="right:632px;top:702px;">0.0000</div><div class="cell" style="right:536px;top:702px;">0.0000</div><div class="cell" style="right:323.8px;top:702px;letter-spacing:0.2px;">2012.11.02 11:27</div><div class="cell" style="right:229px;top:702px;">0.9369</div><div class="cell" style="right:133px;top:702px;">-0.26</div><div class="cell" style="right:24px;top:702px;">22.95</div><div class="cell" style="left:40px;top:722px;text-align:left">37781795</div><div class="cell" style="right:1090.8px;top:722px;letter-spacing:0.2px;">2012.10.30 15:09</div><div class="cell" style="right:996px;top:722px;">sell</div><div class="cell" style="right:920px;top:722px;">0.05</div><div class="cell" style="right:824px;top:722px;">eurusd</div><div class="cell" style="right:728px;top:722px;">1.2963</div><div class="cell" style="right:632px;top:722px;">0.0000</div><div class="cell" style="right:536px;top:722px;">0.0000</div><div class="cell" style="right:323.8px;top:722px;letter-spacing:0.2px;">2012.11.02 11:27</div><div class="cell" style="right:229px;top:722px;">1.2884</div><div class="cell" style="right:133px;top:722px;">0.14</div><div class="cell" style="right:24px;top:722px;">39.50</div><div class="cell" style="left:40px;top:742px;text-align:left">37813703</div><div class="cell" style="right:1090.8px;top:742px;letter-spacing:0.2px;">2012.10.31 10:12</div><div class="cell" style="right:996px;top:742px;">sell</div><div class="cell" style="right:920px;top:742px;">0.10</div><div class="cell" style="right:824px;top:742px;">eurusd</div><div class="cell" style="right:728px;top:742px;">1.3003</div><div class="cell" style="right:632px;top:742px;">0.0000</div><div class="cell" style="right:536px;top:742px;">0.0000</div><div class="cell" style="right:323.8px;top:742px;letter-spacing:0.2px;">2012.11.02 11:27</div><div class="cell" style="right:229px;top:742px;">1.2883</div><div class="cell" style="right:133px;top:742px;">0.20</div><div class="cell" style="right:24px;top:742px;">120.00</div><div class="cell" style="left:40px;top:762px;text-align:left">37819424</div><div class="cell" style="right:1090.8px;top:762px;letter-spacing:0.2px;">2012.10.31 11:35</div><div class="cell" style="right:996px;top:762px;">buy</div><div class="cell" style="right:920px;top:762px;">0.10</div><div class="cell" style="right:824px;top:762px;">usdchf</div><div class="cell" style="right:728px;top:762px;">0.9294</div><div class="cell" style="right:632px;top:762px;">0.0000</div><div class="cell" style="right:536px;top:762px;">0.0000</div><div class="cell" style="right:323.8px;top:762px;letter-spacing:0.2px;">2012.11.02 11:27</div><div class="cell" style="right:229px;top:762px;">0.9369</div><div class="cell" style="right:133px;top:762px;">-0.43</div><div class="cell" style="right:24px;top:762px;">80.05</div><div class="cell" style="left:40px;top:782px;color:#fff;text-align:left">37862045</div><div class="cell" style="right:1090.8px;top:782px;color:#fff;letter-spacing:0.2px;">2012.11.01 08:34</div><div class="cell" style="right:996px;top:782px;color:#fff;">sell</div><div class="cell" style="right:920px;top:782px;color:#fff;">0.10</div><div class="cell" style="right:824px;top:782px;color:#fff;">usdjpy</div><div class="cell" style="right:728px;top:782px;color:#fff;">79.98</div><div class="cell" style="right:632px;top:782px;color:#fff;">0.00</div><div class="cell" style="right:536px;top:782px;color:#fff;">0.00</div><div class="cell" style="right:323.8px;top:782px;color:#fff;letter-spacing:0.2px;">2012.11.02 11:27</div><div class="cell" style="right:229px;top:782px;color:#fff;">80.33</div><div class="cell" style="right:133px;top:782px;color:#fff;">-0.12</div><div class="cell" style="right:24px;top:782px;color:#fff;">-43.57</div><div class="cell" style="left:40px;top:802px;text-align:left">37862285</div><div class="cell" style="right:1090.8px;top:802px;letter-spacing:0.2px;">2012.11.01 08:35</div><div class="cell" style="right:996px;top:802px;">sell</div><div class="cell" style="right:920px;top:802px;">0.10</div><div class="cell" style="right:824px;top:802px;">gbpusd</div><div class="cell" style="right:728px;top:802px;">1.6122</div><div class="cell" style="right:632px;top:802px;">0.0000</div><div class="cell" style="right:536px;top:802px;">0.0000</div><div class="cell" style="right:323.8px;top:802px;letter-spacing:0.2px;">2012.11.02 11:27</div><div class="cell" style="right:229px;top:802px;">1.6097</div><div class="cell" style="right:133px;top:802px;">-0.45</div><div class="cell" style="right:24px;top:802px;">25.00</div>
<div style="left:16px;top:121px;width:1404px;height:17px;background:#D4D0C8"></div>
<div style="left:16px;top:121px;width:1404px;height:1px;background:#fff"></div>
<div class="hd" style="left:16px;top:121px;width:125px;height:17px;"></div>
<div class="t" style="left:21.00px;top:124px;transform-origin:0 0;transform:scaleX(1.0333);">Orden</div>
<div class="hd" style="left:141px;top:121px;width:211px;height:17px;"></div>
<div class="t" style="right:1113px;top:124px;">Tiempo</div>
<div class="hd" style="left:352px;top:121px;width:96px;height:17px;"></div>
<div class="t" style="right:997px;top:124px;">Tipo</div>
<div class="hd" style="left:448px;top:121px;width:76px;height:17px;"></div>
<div class="t" style="right:921px;top:124px;">Volumen</div>
<div class="hd" style="left:524px;top:121px;width:96px;height:17px;"></div>
<div class="t" style="right:825px;top:124px;">Símbolo</div>
<div class="hd" style="left:620px;top:121px;width:96px;height:17px;"></div>
<div class="t" style="right:729px;top:124px;">Precio</div>
<div class="hd" style="left:716px;top:121px;width:96px;height:17px;"></div>
<div class="t" style="right:633px;top:124px;">S / L</div>
<div class="hd" style="left:812px;top:121px;width:96px;height:17px;"></div>
<div class="t" style="right:537px;top:124px;">T / P</div>
<div class="hd" style="left:908px;top:121px;width:211px;height:17px;"></div>
<div class="t" style="right:326px;top:124px;">Tiempo</div>
<div class="hd" style="left:1119px;top:121px;width:96px;height:17px;"></div>
<div class="t" style="right:230px;top:124px;">Precio</div>
<div class="hd" style="left:1215px;top:121px;width:96px;height:17px;"></div>
<div class="t" style="right:134px;top:124px;">Swap</div>
<div class="hd" style="left:1311px;top:121px;width:109px;height:17px;"></div>
<div class="t" style="right:25px;top:124px;">Beneficios</div>
<svg style="left:338px;top:126px;" width="9" height="8" viewBox="0 0 9 8" shape-rendering="crispEdges"><path d="M4 0L0 7" stroke="#808080" fill="none"/><path d="M4 0L8 7M0 7.5H9" stroke="#fff" fill="none"/></svg>
<div style="left:1420px;top:121px;width:16px;height:690px;background-color:#fff;background-image:linear-gradient(45deg,#D4D0C8 25%,transparent 25%,transparent 75%,#D4D0C8 75%),linear-gradient(45deg,#D4D0C8 25%,transparent 25%,transparent 75%,#D4D0C8 75%);background-size:2px 2px;background-position:0 0,1px 1px"></div>
<div class="rb" style="left:1420px;top:121px;width:16px;height:17px;"></div>
<svg style="left:1424px;top:127px;" width="7" height="4" viewBox="0 0 7 4" shape-rendering="crispEdges"><path d="M3 0h1v1h1v1h1v1h1v1h-7v-1h1v-1h1v-1h1z" fill="#000"/></svg>
<div class="rb" style="left:1420px;top:366px;width:16px;height:244px;"></div>
<div class="rb" style="left:1420px;top:795px;width:16px;height:16px;"></div>
<svg style="left:1424px;top:801px;" width="7" height="4" viewBox="0 0 7 4" shape-rendering="crispEdges"><path d="M0 0h7v1h-1v1h-1v1h-1v1h-1v-1h-1v-1h-1v-1h-1z" fill="#000"/></svg>
<div style="left:16px;top:811px;width:1421px;height:1px;background:#000"></div>
<div style="left:16px;top:812px;width:1421px;height:19px;background:#D4D0C8"></div>
<div style="left:98px;top:811px;width:114px;height:18px;background:#fff;border:1px solid #000;border-top:none"></div>
<div class="t" style="left:107.01px;top:814px;transform-origin:0 0;transform:scaleX(0.9895);">Historial de cuentas</div>
<div class="t" style="left:28.00px;top:815px;transform-origin:0 0;transform:scaleX(0.9677);color:#404040">Operaciones</div>
<div class="t" style="left:220.00px;top:815px;transform-origin:0 0;transform:scaleX(1.0000);color:#404040">Noticias</div>
<div style="left:269px;top:816px;width:1px;height:11px;background:#404040"></div>
<div class="t" style="left:279.00px;top:815px;transform-origin:0 0;transform:scaleX(0.9688);color:#404040">Avisos</div>
<div style="left:320px;top:816px;width:1px;height:11px;background:#404040"></div>
<div class="t" style="left:328.00px;top:815px;transform-origin:0 0;transform:scaleX(1.0000);color:#404040">Buzón</div>
<div style="left:369px;top:816px;width:1px;height:11px;background:#404040"></div>
<div class="t" style="left:377.03px;top:815px;transform-origin:0 0;transform:scaleX(0.9714);color:#404040">Signals</div>
<div style="left:422px;top:816px;width:1px;height:11px;background:#404040"></div>
<div class="t" style="left:429.95px;top:815px;transform-origin:0 0;transform:scaleX(1.0476);color:#404040">Expertos</div>
<div style="left:485px;top:816px;width:1px;height:11px;background:#404040"></div>
<div class="t" style="left:492.96px;top:815px;transform-origin:0 0;transform:scaleX(1.0370);color:#404040">Diario</div>
<div style="left:532px;top:816px;width:1px;height:11px;background:#404040"></div>
<div style="left:15px;top:811px;width:1px;height:21px;background:#808080"></div>
<div style="left:0px;top:834px;width:1440px;height:1px;background:#808080"></div>
<div style="left:0px;top:835px;width:1440px;height:1px;background:#fff"></div>
<div class="t" style="left:1.01px;top:841px;transform-origin:0 0;transform:scaleX(0.9930);">Para obtener ayuda, pulse F1</div>
<div style="left:719px;top:839px;width:1px;height:16px;background:#808080"></div>
<div style="left:720px;top:839px;width:1px;height:16px;background:#fff"></div>
<div style="left:828px;top:839px;width:1px;height:16px;background:#808080"></div>
<div style="left:829px;top:839px;width:1px;height:16px;background:#fff"></div>
<div style="left:929px;top:839px;width:1px;height:16px;background:#808080"></div>
<div style="left:930px;top:839px;width:1px;height:16px;background:#fff"></div>
<div style="left:1001px;top:839px;width:1px;height:16px;background:#808080"></div>
<div style="left:1002px;top:839px;width:1px;height:16px;background:#fff"></div>
<div style="left:1072px;top:839px;width:1px;height:16px;background:#808080"></div>
<div style="left:1073px;top:839px;width:1px;height:16px;background:#fff"></div>
<div style="left:1142px;top:839px;width:1px;height:16px;background:#808080"></div>
<div style="left:1143px;top:839px;width:1px;height:16px;background:#fff"></div>
<div style="left:1212px;top:839px;width:1px;height:16px;background:#808080"></div>
<div style="left:1213px;top:839px;width:1px;height:16px;background:#fff"></div>
<div style="left:1279px;top:839px;width:1px;height:16px;background:#808080"></div>
<div style="left:1280px;top:839px;width:1px;height:16px;background:#fff"></div>
<div class="t" style="left:723.97px;top:841px;transform-origin:0 0;transform:scaleX(1.0294);">Default</div>
<div class="t" style="left:1345.98px;top:841px;transform-origin:0 0;transform:scaleX(1.0189);">7299/21 kb</div>
<div style="left:0px;top:857px;width:1440px;height:1px;background:#fff"></div>
<div class="rb" style="left:2px;top:860px;width:54px;height:37px;"></div>
<div class="t" style="left:21px;top:873px;font-weight:bold;font-size:11.5px">Inicio</div>
<div class="rb" style="left:115px;top:860px;width:47px;height:37px;"></div>
<div class="rb" style="left:165px;top:860px;width:47px;height:37px;"></div>
<div class="rb" style="left:265px;top:860px;width:47px;height:37px;"></div>
<div class="rb" style="left:315px;top:860px;width:47px;height:37px;"></div>
<div class="rb" style="left:415px;top:860px;width:47px;height:37px;"></div>
<div class="rb" style="left:565px;top:860px;width:47px;height:37px;"></div>
<div class="rb" style="left:665px;top:860px;width:47px;height:37px;"></div>
<div class="rb" style="left:765px;top:860px;width:47px;height:37px;"></div>
<div class="rb" style="left:215px;top:860px;width:40px;height:37px;"></div>
<div class="rb" style="left:465px;top:860px;width:40px;height:37px;"></div>
<div class="rb" style="left:715px;top:860px;width:44px;height:37px;"></div>
<div style="left:615px;top:860px;width:47px;height:37px;background:#fff;box-shadow:inset 1px 1px #404040,inset -1px -1px #fff,inset 2px 2px #808080"></div>
<div class="rb" style="left:255px;top:860px;width:4px;height:37px;"></div>
<div class="rb" style="left:259px;top:860px;width:4px;height:37px;"></div>
<div class="rb" style="left:505px;top:860px;width:4px;height:37px;"></div>
<div class="rb" style="left:509px;top:860px;width:4px;height:37px;"></div>
<div class="rb" style="left:759px;top:860px;width:4px;height:37px;"></div>
<div style="left:1256px;top:860px;width:182px;height:38px;box-shadow:inset 1px 1px #808080,inset -1px -1px #fff"></div>
<div class="t" style="left:1373.00px;top:865px;transform-origin:0 0;transform:scaleX(1.0952);">0:15</div>
<div class="t" style="left:1355.94px;top:881px;transform-origin:0 0;transform:scaleX(1.0566);">16/11/2012</div>
<svg style="left:0;top:0" width="1440" height="900" viewBox="0 0 1440 900"><rect x="12.5" y="45.5" width="12" height="11" rx="1.5" fill="#fff" stroke="#3A7CC8"/><rect x="13" y="46" width="11" height="1" fill="#3A7CC8" opacity=".6"/><path d="M15 47.5v6M13.8 48.8l1.2-1.3 1.2 1.3M13.8 52.2l1.2 1.3 1.2-1.3" stroke="#7A9AB8" fill="none" stroke-width="1.2"/><path d="M21.5 48.5H25.5V52.5H29.5V56.5H25.5V60.5H21.5V56.5H17.5V52.5H21.5Z" fill="#33E633" stroke="#0A8A0A"/><rect x="22" y="50" width="2" height="3" fill="#9BFF9B" opacity=".7"/><rect x="50.5" y="49.5" width="13" height="12" rx="1.5" fill="#fff" stroke="#3A7CC8"/><rect x="51" y="50" width="12" height="1" fill="#3A7CC8" opacity=".6"/><path d="M61 57.5h1" stroke="none"/><rect x="47.5" y="45.5" width="13" height="10" rx="1.5" fill="#fff" stroke="#3A7CC8"/><rect x="48" y="46" width="12" height="1" fill="#3A7CC8" opacity=".6"/><path d="M49 52.5h9M50.5 48v6M52 57.5h9M49.3 49.3l1.2-1.2 1.2 1.2M56.8 51.3l1.2 1.2-1.2 1.2M53.2 56.3L52 57.5l1.2 1.2M59.8 56.3l1.2 1.2-1.2 1.2" stroke="#7A9AB8" fill="none" stroke-width="1.1"/><rect x="89.5" y="45.5" width="15" height="15" rx="1.5" fill="#fff" stroke="#5C9EE6"/><path d="M92 48h1M95 48h1M99 48h2M99 50h2M92 56h4M92 58h4M99 58h2M99 56h2" stroke="#ddd"/><path d="M94.5 47.5l-3.5 3.5h2v2.5h3v-2.5h2z" fill="#2FCC2F" stroke="#138A13" stroke-width=".8"/><path d="M98.5 59.5l3.5-3.5h-2v-2.5h-3v2.5h-2z" fill="#F5805A" stroke="#D84A16" stroke-width=".8"/><circle cx="125.5" cy="53.5" r="5" fill="none" stroke="#555" stroke-width="1.1"/><path d="M125.5 46v5M125.5 56v5M118 53.5h5M128 53.5h5" stroke="#444" stroke-width="1.3"/><path d="M144.5 46.5h4l1 1.5h5.5v7h-10.5z" fill="#F5E08A" stroke="#C8A030"/><rect x="145" y="49" width="10" height="5" fill="#FFF3B0"/><path d="M148.5 56v1M148.5 58v1M148.5 60v1" stroke="#333"/><path d="M156 49.5l1.8 3.6 4 .5-2.9 2.8.7 4-3.6-1.9-3.6 1.9.7-4-2.9-2.8 4-.5z" fill="#F6D845" stroke="#B8860B" stroke-width=".9"/><rect x="173.5" y="46.5" width="15" height="13" rx="1.2" fill="#fff" stroke="#3A7CC8"/><rect x="174" y="47" width="3" height="12" fill="#8AB8E8"/><rect x="175" y="54" width="1" height="4" fill="#444"/><circle cx="175.5" cy="48.5" r=".8" fill="#000"/><path d="M179 48.5h9M179 50.5h9M179 52.5h9M179 54.5h9" stroke="#C8DCF5"/><path d="M178 48h1v1h-1zM178 50h1v1h-1zM178 52h1v1h-1zM178 54h1v1h-1z" fill="#333"/><path d="M178 48h1v1h-1zM178 54h1v1h-1z" fill="#E00"/><rect x="201.5" y="45.5" width="12" height="13" fill="#fff" stroke="#C8C0B0"/><path d="M203.5 47v9M211.5 47v9" stroke="#777"/><path d="M212 57l5.5 5" stroke="#C8A020" stroke-width="2.2"/><circle cx="209" cy="54" r="4.7" fill="#D8ECFA" fill-opacity=".85" stroke="#6FA5DA" stroke-width="1.2"/><rect x="207" y="51" width="3" height="5" fill="#9AB" opacity=".6"/><path d="M236.5 45.5h7l3 3v11h-10z" fill="#fff" stroke="#666"/><path d="M238 48h3M238 50h5M238 52h5M238 54h3" stroke="#888"/><path d="M244.5 50.5H248.5V54.5H252.5V58.5H248.5V62.5H244.5V58.5H240.5V54.5H244.5Z" fill="#33E633" stroke="#0A8A0A"/><rect x="245" y="52" width="2" height="3" fill="#9BFF9B" opacity=".7"/><path d="M336.5 45l7.5 8-7.5 8-7.5-8z" fill="#F8D850" stroke="#C89820" stroke-width="1"/><rect x="335.5" y="49" width="2" height="5" fill="#333"/><rect x="335.5" y="55.5" width="2" height="2" fill="#333"/><path d="M358 51.5c0 3 3 8.5 7.5 8.5 4 0 6.5-4 6.5-8z" fill="#F2CE48" stroke="#C09020" stroke-width=".8"/><ellipse cx="365" cy="49.5" rx="8.3" ry="2.8" fill="#7FB2E2" stroke="#4A82BE" stroke-width=".8"/><ellipse cx="365" cy="47.5" rx="4.5" ry="2.8" fill="#9AC8F0" stroke="#4A82BE" stroke-width=".8"/><circle cx="369.5" cy="57" r="4.3" fill="#18A838" stroke="#0A7020" stroke-width=".8"/><path d="M368 54.5v5l3.5-2.5z" fill="#fff"/><path d="M496.5 47v13M493 59.5h14" stroke="#555" stroke-width="1.1"/><path d="M495 49l1.5-2 1.5 2M505 58l2 1.5-2 1.5" stroke="#555" fill="none" stroke-width="1"/><path d="M524.5 47v13M521 59.5h14" stroke="#555" stroke-width="1.1"/><path d="M523 49l1.5-2 1.5 2M533 58l2 1.5-2 1.5" stroke="#555" fill="none" stroke-width="1"/><path d="M552.5 47v13M549 59.5h14" stroke="#555" stroke-width="1.1"/><path d="M551 49l1.5-2 1.5 2M561 58l2 1.5-2 1.5" stroke="#555" fill="none" stroke-width="1"/><path d="M499.5 57v-4M500 53h0M499.5 56.5h-2M499.5 49v4M499.5 49.5h3" stroke="#1A9A1A" stroke-width="1.4" fill="none"/><rect x="527.5" y="49.5" width="4" height="7" fill="#3CE03C" stroke="#148A14"/><path d="M529.5 47v2.5M529.5 56.5v2" stroke="#148A14"/><path d="M551 57c2-4 4-7 6-7s4 3 6 4" stroke="#1A9A1A" stroke-width="1.2" fill="none"/><path d="M590 57l4.5 4.5" stroke="#C8A020" stroke-width="2.4"/><circle cx="587" cy="51.5" r="5" fill="#E0F0FC" stroke="#3A82D2" stroke-width="1.5"/><path d="M584 51.5h6" stroke="#3A82D2" stroke-width="2"/><path d="M587 48.5v6" stroke="#3A82D2" stroke-width="2"/><path d="M618 57l4.5 4.5" stroke="#C8A020" stroke-width="2.4"/><circle cx="615" cy="51.5" r="5" fill="#E0F0FC" stroke="#3A82D2" stroke-width="1.5"/><path d="M612 51.5h6" stroke="#3A82D2" stroke-width="2"/><path d="M646.5 47v13M644 59.5h14" stroke="#555" stroke-width="1.1"/><path d="M645 49l1.5-2 1.5 2M656 58l2 1.5-2 1.5" stroke="#555" fill="none"/><path d="M674.5 47v13M672 59.5h14" stroke="#555" stroke-width="1.1"/><path d="M673 49l1.5-2 1.5 2M684 58l2 1.5-2 1.5" stroke="#555" fill="none"/><path d="M649.5 49.5v6l4-3z" fill="#40D040" stroke="#148A14" stroke-width=".9"/><path d="M679.5 47v10" stroke="#1A5FB0" stroke-width="1.2"/><path d="M685 52.5h-4M682.5 50.5l-2 2 2 2" stroke="#D03010" stroke-width="1.3" fill="none"/><path d="M706.5 45.5h6l2.5 2.5v9h-8.5z" fill="#fff" stroke="#777"/><path d="M708.5 47.5h6l2.5 2.5v7h-8.5z" fill="#fff" stroke="#777"/><path d="M714.5 49.5H718.5V53.5H722.5V57.5H718.5V61.5H714.5V57.5H710.5V53.5H714.5Z" fill="#33E633" stroke="#0A8A0A"/><rect x="715" y="51" width="2" height="3" fill="#9BFF9B" opacity=".7"/><path d="M724 52h5l-2.5 3z" fill="#000"/><circle cx="747.5" cy="53" r="7.3" fill="#1C68C8"/><circle cx="747.5" cy="53" r="5.3" fill="#F4F8FF"/><path d="M747.5 49v4.5h3" stroke="#333" fill="none"/><path d="M759 52h5l-2.5 3z" fill="#000"/><rect x="775.5" y="45.5" width="15" height="15" fill="#fff" stroke="#2A6CC0"/><rect x="776" y="46" width="14" height="2" fill="#5A94D8"/><path d="M776 53.5h14" stroke="#2A6CC0"/><path d="M777 51l3-1 3 1 3-1.5 3 .5" stroke="#C03020" fill="none"/><path d="M777 57.5l3-1.5 3 1.5 3-2 3 1" stroke="#20A020" fill="none"/><path d="M794 52h5l-2.5 3z" fill="#000"/><path d="M32 52h5l-2.5 3z" fill="#000"/><path d="M67 52h5l-2.5 3z" fill="#000"/><path d="M290 79h5l-2.5 3z" fill="#000"/><path d="M2 7h6v1.6h-4v1.2h3.4v1.5h-3.4v1.7h-2z" fill="#6A6058"/><path d="M10 7.2l6.8 5.6M16.8 7.2L10 12.8" stroke="#5E544C" stroke-width="2.2"/><path d="M9 3h3l1.7 1.8L15.4 3h3l-4.7 3.6z" fill="#E8304A"/><path d="M9 16h3l1.7-1.8L15.4 16h3l-4.7-3.6z" fill="#20B858"/><rect x="4" y="20" width="16" height="16" fill="#D8D8D0"/><rect x="5.5" y="21.5" width="10.5" height="8" fill="#fff" stroke="#4A88F0" stroke-width="1.1"/><path d="M7 25.5h7M8.5 24l-1.5 1.5 1.5 1.5M12.5 24l1.5 1.5-1.5 1.5" stroke="#4A88F0" fill="none"/><rect x="8.5" y="26.5" width="10.5" height="8.5" fill="#fff" stroke="#4A88F0" stroke-width="1.1"/><path d="M10 29.5l2 3 1.5-2.5 1.5 2.5 1.5-2 1 1.5" stroke="#4A88F0" fill="none"/><rect x="1412.5" y="40.5" width="26" height="24" fill="none" stroke="#808080"/><path d="M1418 45h14l1 1v10l-1 1h-9l-1.5 3.5-1-3.5h-2.5l-1-1v-10z" fill="#6384C0" stroke="#5274B4" stroke-width=".6"/><text x="1425" y="55" font-family="Liberation Sans" font-size="10" fill="#fff" text-anchor="middle">4</text><path d="M17 73V85L19.8 82.3L22 87.5L23.8 86.7L21.6 81.7H25.5Z" fill="#444"/><path d="M49.5 73v5M49.5 83v5M42 80.5h5.5M51.5 80.5h5.5" stroke="#444" stroke-width="1.2"/><rect x="49" y="80" width="1" height="1" fill="#444"/><path d="M83.5 74v13M106 80.5h12.5M133 87.5L146 74.5" stroke="#444" stroke-width="1.2"/><path d="M160 81.5L168 74M160.5 85.5L174 78M165 87L173.5 80" stroke="#555" stroke-width=".9"/><path d="M162.5 79.5v7.5M165.5 78v6M168.5 76v7M172 72v7.5" stroke="#444" stroke-width="1.5"/><path d="M175 84.6h-3.4v4h3.4M171.6 86.6h3" stroke="#444" stroke-width="1.3" fill="none"/><rect x="189" y="73" width="1" height="1" fill="#444"/><rect x="191" y="73" width="1" height="1" fill="#444"/><rect x="193" y="73" width="1" height="1" fill="#444"/><rect x="195" y="73" width="1" height="1" fill="#444"/><rect x="197" y="73" width="1" height="1" fill="#444"/><rect x="199" y="73" width="1" height="1" fill="#444"/><rect x="201" y="73" width="1" height="1" fill="#444"/><rect x="189" y="76" width="1" height="1" fill="#444"/><rect x="191" y="76" width="1" height="1" fill="#444"/><rect x="193" y="76" width="1" height="1" fill="#444"/><rect x="195" y="76" width="1" height="1" fill="#444"/><rect x="197" y="76" width="1" height="1" fill="#444"/><rect x="199" y="76" width="1" height="1" fill="#444"/><rect x="201" y="76" width="1" height="1" fill="#444"/><rect x="189" y="80" width="1" height="1" fill="#444"/><rect x="191" y="80" width="1" height="1" fill="#444"/><rect x="193" y="80" width="1" height="1" fill="#444"/><rect x="195" y="80" width="1" height="1" fill="#444"/><rect x="197" y="80" width="1" height="1" fill="#444"/><rect x="199" y="80" width="1" height="1" fill="#444"/><rect x="201" y="80" width="1" height="1" fill="#444"/><rect x="189" y="84" width="1" height="1" fill="#444"/><rect x="191" y="84" width="1" height="1" fill="#444"/><rect x="193" y="84" width="1" height="1" fill="#444"/><rect x="195" y="84" width="1" height="1" fill="#444"/><rect x="197" y="84" width="1" height="1" fill="#444"/><path d="M203 84.5h-3.5v4.5M199.5 86.5h2.5" stroke="#444" stroke-width="1.3" fill="none"/><path d="M220.3 85.5L223.5 76.3L226.7 85.5M221.3 82.5h4.4" stroke="#444" stroke-width="1.7" fill="none"/><rect x="246" y="74" width="1" height="1" fill="#444"/><rect x="246" y="87" width="1" height="1" fill="#444"/><rect x="248" y="74" width="1" height="1" fill="#444"/><rect x="248" y="87" width="1" height="1" fill="#444"/><rect x="250" y="74" width="1" height="1" fill="#444"/><rect x="250" y="87" width="1" height="1" fill="#444"/><rect x="252" y="74" width="1" height="1" fill="#444"/><rect x="252" y="87" width="1" height="1" fill="#444"/><rect x="254" y="74" width="1" height="1" fill="#444"/><rect x="254" y="87" width="1" height="1" fill="#444"/><rect x="256" y="74" width="1" height="1" fill="#444"/><rect x="256" y="87" width="1" height="1" fill="#444"/><rect x="258" y="74" width="1" height="1" fill="#444"/><rect x="258" y="87" width="1" height="1" fill="#444"/><rect x="246" y="76" width="1" height="1" fill="#444"/><rect x="258" y="76" width="1" height="1" fill="#444"/><rect x="246" y="78" width="1" height="1" fill="#444"/><rect x="258" y="78" width="1" height="1" fill="#444"/><rect x="246" y="80" width="1" height="1" fill="#444"/><rect x="258" y="80" width="1" height="1" fill="#444"/><rect x="246" y="82" width="1" height="1" fill="#444"/><rect x="258" y="82" width="1" height="1" fill="#444"/><rect x="246" y="84" width="1" height="1" fill="#444"/><rect x="258" y="84" width="1" height="1" fill="#444"/><rect x="246" y="86" width="1" height="1" fill="#444"/><rect x="258" y="86" width="1" height="1" fill="#444"/><rect x="245" y="73" width="2" height="1" fill="#444"/><path d="M248.5 77.5h8M252.5 77.5v8" stroke="#444" stroke-width="1.6"/><path d="M273 79h7l-3.5-4.5z" fill="#444"/><path d="M280 83h7l-3.5 4.5z" fill="#444"/><path d="M275.5 80.5l2 2.5 4.5-5" stroke="#444" stroke-width="1.2" fill="none"/></svg>
<svg style="left:0;top:0" width="1440" height="900" viewBox="0 0 1440 900"><defs><linearGradient id="lin2" x1="0" y1="0" x2="0" y2="1"><stop offset="0" stop-color="#A84A42"/><stop offset=".45" stop-color="#8A2A22"/><stop offset=".7" stop-color="#3A0E0A"/><stop offset="1" stop-color="#5A1A12"/></linearGradient><radialGradient id="hexg" cx=".4" cy=".35" r=".7"><stop offset="0" stop-color="#FFD040"/><stop offset="1" stop-color="#F0A000"/></radialGradient><linearGradient id="fold" x1="0" y1="0" x2="0" y2="1"><stop offset="0" stop-color="#FFF6C8"/><stop offset="1" stop-color="#F0D890"/></linearGradient><linearGradient id="skyg" x1="0" y1="0" x2="0" y2="1"><stop offset="0" stop-color="#6CCFF8"/><stop offset="1" stop-color="#0A9AE0"/></linearGradient><linearGradient id="keyg" x1="0" y1="0" x2="0" y2="1"><stop offset="0" stop-color="#555"/><stop offset="1" stop-color="#111"/></linearGradient><linearGradient id="npg" x1="1" y1="0" x2="0" y2="1"><stop offset="0" stop-color="#D8F4FC"/><stop offset=".5" stop-color="#80C8E0"/><stop offset="1" stop-color="#40A8C8"/></linearGradient><linearGradient id="dsk" x1="0" y1="0" x2="0" y2="1"><stop offset="0" stop-color="#6AA8E8"/><stop offset="1" stop-color="#1A58B8"/></linearGradient></defs><path d="M5 872.5c2-1 4-1 6.5.3l-1.5 5.2c-2.5-1.2-4.5-1.2-6.5-.2z" fill="#F05A22"/><path d="M12.3 873c2.4 1.2 4.5 1.2 7.2-.2l-1.6 5.6c-2.6 1.3-4.6 1.2-7-.1z" fill="#7CBB2A"/><path d="M3.8 878.5c2-1 4-1 6.2.2l-1.5 5.3c-2.4-1.3-4.4-1.3-6.3-.2z" fill="#2A9AE0"/><path d="M10.8 879c2.4 1.3 4.5 1.3 7 0l-1.5 5.4c-2.6 1.3-4.6 1.3-7-.1z" fill="#FCC01A"/><rect x="73.5" y="864.5" width="31" height="30" rx="3" fill="url(#lin2)" stroke="#8A7A70"/><path d="M74.5 884c2 3 3 6 6 8M103.5 884c-2 3-3 6-6 8" stroke="#B8B0A8" stroke-width="1.4" fill="none"/><path d="M75 893.5c5-3 9-1 14-1s9-2 14 1" stroke="#D0C8C0" stroke-width="1.8" fill="none"/><path d="M86.3 866c-1 8 0 18 -.5 26M91.3 866c1 8 0 18 .5 26" stroke="#E0D8D0" stroke-width="1.5" fill="none"/><text x="89" y="880" font-family="Liberation Serif" font-weight="bold" font-size="7" fill="#E0D8D0" text-anchor="middle" textLength="27" lengthAdjust="spacingAndGlyphs">LINEAGE</text><circle cx="139" cy="879" r="14.2" fill="#4CAF50"/><path d="M139 879L126.7 871.9A14.2 14.2 0 0 1 151.3 871.9Z" fill="#DB3A2E"/><path d="M139 879L151.3 871.9A14.2 14.2 0 0 1 139 893.2Z" fill="#FCC934"/><path d="M139 865A14.2 14.2 0 0 1 151.3 872H139z" fill="#DB3A2E"/><path d="M151.3 872A14.2 14.2 0 0 1 139 893.2L146 881z" fill="#FCC934"/><path d="M126.7 872L133 883 139 893.2A14.2 14.2 0 0 1 126.7 872z" fill="#4CAF50"/><circle cx="139" cy="879" r="6.3" fill="#fff"/><circle cx="139" cy="879" r="5" fill="#3A7BD5"/><polygon points="190.8,872.0 186.9,878.8 179.1,878.8 175.2,872.0 179.1,865.2 186.9,865.2" fill="url(#hexg)" stroke="#D88000" stroke-width=".8"/><polygon points="203.8,879.0 199.9,885.8 192.1,885.8 188.2,879.0 192.1,872.2 199.9,872.2" fill="url(#hexg)" stroke="#D88000" stroke-width=".8"/><polygon points="189.8,887.0 185.9,893.8 178.1,893.8 174.2,887.0 178.1,880.2 185.9,880.2" fill="url(#hexg)" stroke="#D88000" stroke-width=".8"/><path d="M180 868.5l6 6M186 868.5l-6 6M192 882l8-6M178 891l6-7" stroke="#222" stroke-width="1.4"/><path d="M221.5 866.5h9l1 2h6l1-1h10v26h-27z" fill="#F6E6A8" stroke="#C8B070"/><rect x="223" y="867" width="3" height="2" fill="#22B022"/><rect x="232" y="869" width="3" height="2" fill="#E02020"/><rect x="240" y="871" width="3" height="2" fill="#2A90E0"/><rect x="222" y="873" width="27" height="20" fill="url(#fold)" stroke="#C8B070"/><path d="M223.5 894v-11h24v11h-5v-6h-14v6z" fill="#8CD0F4" stroke="#3A90D0"/><rect x="274" y="864" width="30" height="30" rx="2" fill="#fff"/><path d="M276 874.0l4 -4 3 2.5 3-3 3 2.5 3-2 3 2.5 3 2 3 3" stroke="#F04020" fill="none" stroke-width="1"/><path d="M276 876.6l4 -4 3 2.5 3-3 3 2.5 3-2 3 2.5 3 2 3 3" stroke="#F08020" fill="none" stroke-width="1"/><path d="M276 879.2l4 -4 3 2.5 3-3 3 2.5 3-2 3 2.5 3 2 3 3" stroke="#C8B020" fill="none" stroke-width="1"/><path d="M276 881.8l4 -4 3 2.5 3-3 3 2.5 3-2 3 2.5 3 2 3 3" stroke="#80C020" fill="none" stroke-width="1"/><text x="289" y="890" font-family="Liberation Sans" font-size="9.5" fill="#222" text-anchor="middle">alpari</text><rect x="324" y="864" width="30" height="30" rx="2" fill="#fff"/><path d="M326 874.0l4 -4 3 2.5 3-3 3 2.5 3-2 3 2.5 3 2 3 3" stroke="#F04020" fill="none" stroke-width="1"/><path d="M326 876.6l4 -4 3 2.5 3-3 3 2.5 3-2 3 2.5 3 2 3 3" stroke="#F08020" fill="none" stroke-width="1"/><path d="M326 879.2l4 -4 3 2.5 3-3 3 2.5 3-2 3 2.5 3 2 3 3" stroke="#C8B020" fill="none" stroke-width="1"/><path d="M326 881.8l4 -4 3 2.5 3-3 3 2.5 3-2 3 2.5 3 2 3 3" stroke="#80C020" fill="none" stroke-width="1"/><text x="339" y="890" font-family="Liberation Sans" font-size="9.5" fill="#222" text-anchor="middle">alpari</text><rect x="373.5" y="863.5" width="31" height="31" rx="5" fill="#F6F8FA" stroke="#6A88A8"/><path d="M390.5 866.5c-5 3.5-2 6.5-1.5 9s-1.5 4-2.5 5M393.5 869c-3 2-1 4-.5 5.5s-.5 3-1.5 4" stroke="#E87020" stroke-width="1.7" fill="none"/><path d="M381.5 880.5h14M382.5 883.5h12M383.5 886.5h10M380 890.5c3 1.5 15 1.5 17 0M395.5 881c3-1 4 1.5 1 3.5" stroke="#5A7A98" stroke-width="1.5" fill="none"/><path d="M434 865.5l19 4.5-3 18-19-4.5z" fill="#88C468" stroke="#5A9A40" stroke-width=".6"/><path d="M430 868.5l20 3-2 18-20-3z" fill="#F8A848" stroke="#D88020" stroke-width=".6"/><rect x="427.5" y="873.5" width="21" height="17" fill="#D0E8FC" stroke="#5A9ADA"/><rect x="432" y="881" width="12" height="4" fill="#fff"/><rect x="443" y="876" width="4" height="3" fill="#D04020"/><path d="M438 876.5h4M438 878.5h4" stroke="#8AB"/><path d="M424 888c7 4 15 1 22-3 3-1 6 0 8 2" stroke="#F0B840" stroke-width="2" fill="none"/><circle cx="476.5" cy="869.5" r="7" fill="#2EB0F0"/><circle cx="493.5" cy="887.5" r="7" fill="#10A0E8"/><circle cx="485" cy="878.5" r="13" fill="url(#skyg)"/><path d="M491.5 872.5c-1.5-2-4-2.8-6.3-2.8-3.7 0-5.8 1.8-5.8 4.2 0 5.3 11.6 3 11.6 8.7 0 2.4-2.4 4.2-6.3 4.2-3.2 0-5.3-1.4-6.5-3.5" stroke="#fff" stroke-width="3.2" fill="none"/><path d="M529.5 866.5h8l3 3 3 4.5v10l-3 4.5-3 3h-8l-3-3-3-4.5v-10l3-4.5z" fill="#00F000" stroke="#000" stroke-width="1.1"/><path d="M533.5 871.5l2.5 2.5v10l-2.5 2.5-2.5-2.5v-10z" fill="#D4D0C8" stroke="#000" stroke-width="1"/><rect x="545.5" y="870.5" width="7" height="7" fill="#00F000" stroke="#000" stroke-width="1.1"/><rect x="545.5" y="882.5" width="7" height="7" fill="#00F000" stroke="#000" stroke-width="1.1"/><ellipse cx="592" cy="889" rx="7" ry="3.5" fill="#E0E0E0" stroke="#B0B0B0"/><path d="M574.5 870.5h5v16h-5z" fill="#E8E8E8" stroke="#A8A8A8"/><path d="M580.5 866.5l21 2v16l-21-2z" fill="#222" stroke="#888"/><path d="M582 876l2-4 2 6 2-5 2 7 2-8 2 6 2-3 3 2" stroke="#22D022" fill="none" stroke-width="1.1"/><path d="M582 871h18M582 880h18" stroke="#3A6A3A" stroke-width=".5"/><path d="M623 869h13l1 3.5h-8v2.5h6.5v3.5h-6.5v4h-6z" fill="#6E6E6E" stroke="#3A3A3A" stroke-width=".8"/><path d="M635.5 873h6l3 4 3-4h6l-6 7 6.5 7h-6l-3.5-4-3.5 4h-6l6.5-7z" fill="#808080" stroke="#333" stroke-width=".8"/><path d="M637 863.5h4.5l3 3.5 3-3.5h4l-7 8.5z" fill="#E02828"/><path d="M641.5 863.5l3 3.5 3-3.5" fill="#FF8A70"/><path d="M637.5 894.5h4.5l3-3.5 3 3.5h4l-7-8.5z" fill="#18A838"/><path d="M642 894.5l3-3.5 3 3.5" fill="#70E090"/><path d="M678 872.5l11-4.5 11 4 4.5 11.5-1 3-9 6.5-20-5.5-2-2.5z" fill="#161616"/><path d="M679 873l10-4 10 3.5 2.5 8-8 4.5-16-4.5z" fill="#3A3A3A"/><path d="M694 872.5c-2-2-6-2-8 0s-1.5 5 1.5 5.5 5-1 5.5-2.5l-3-.5" stroke="#fff" stroke-width="1.8" fill="none"/><path d="M749 868.5l3 1.5-3 22-9 1z" fill="#C8A048"/><path d="M748 868l2 1-9 24-4-1z" fill="#F0F4F8" stroke="#B8C4CC" stroke-width=".6"/><path d="M733 866l15 2-8.5 24.5-18.5-6.5z" fill="url(#npg)"/><path d="M733.5 866l14.5 2" stroke="#555" stroke-width="1.3" stroke-dasharray="1 1"/><rect x="773" y="863" width="32" height="32" fill="#fff"/><path d="M776.8 873.7A13.2 13.2 0 0 1 800 871.6L789.6 882.4L788.6 874Z" fill="#0A68B8"/><path d="M778 886.6L787.8 875.4L788.4 884.2L800.6 884.3A13.2 13.2 0 0 1 778 886.6Z" fill="#0A68B8"/><rect x="1284" y="841" width="2" height="9" fill="#4A7800"/><rect x="1284" y="851" width="2" height="2" fill="#8B0000"/><rect x="1287" y="841" width="2" height="8" fill="#4A7800"/><rect x="1287" y="850" width="2" height="3" fill="#8B0000"/><rect x="1290" y="841" width="2" height="7" fill="#4A7800"/><rect x="1290" y="849" width="2" height="4" fill="#8B0000"/><rect x="1293" y="841" width="2" height="6" fill="#4A7800"/><rect x="1293" y="848" width="2" height="5" fill="#8B0000"/><rect x="1296" y="841" width="2" height="5" fill="#4A7800"/><rect x="1296" y="847" width="2" height="6" fill="#8B0000"/><rect x="1299" y="841" width="2" height="4" fill="#4A7800"/><rect x="1299" y="846" width="2" height="7" fill="#8B0000"/><rect x="1302" y="841" width="2" height="3" fill="#4A7800"/><rect x="1302" y="845" width="2" height="8" fill="#8B0000"/><rect x="1305" y="841" width="2" height="2" fill="#4A7800"/><rect x="1305" y="844" width="2" height="9" fill="#8B0000"/><path d="M1263 876l2.5-2.5 2.5 2.5M1263 880l2.5-2.5 2.5 2.5" stroke="#000" stroke-width="1.3" fill="none"/><rect x="1283.5" y="873.5" width="11" height="10" fill="#B8B8B8" stroke="#555"/><rect x="1285" y="875" width="8" height="7" fill="#8A8A8A"/><path d="M1286 886.5h8" stroke="#555"/><path d="M1281 871v15M1279.5 871v4h3v-4" stroke="#333" fill="none"/><path d="M1303.5 871v16" stroke="#555" stroke-width="1.5"/><path d="M1304 871.5c3-1 6 1 8 0l1 1v6c-3 1-6-1-9 0z" fill="#fff" stroke="#777" stroke-width=".8"/><circle cx="1314" cy="881.5" r="4.5" fill="#E02020"/><path d="M1312 879.5l4 4M1316 879.5l-4 4" stroke="#fff" stroke-width="1.2"/><path d="M1327.5 875.5h3l4-4v14l-4-4h-3z" fill="#E8E8E8" stroke="#888"/><path d="M1337 875c1 2 1 4 0 6M1339.5 873c2 3 2 7 0 10" stroke="#999" fill="none"/><rect x="1420" y="873" width="15" height="12" fill="url(#dsk)" stroke="#7AA0C8" stroke-width=".5"/><rect x="1420" y="883" width="15" height="2" fill="#1A2A48"/></svg>
</body></html>
